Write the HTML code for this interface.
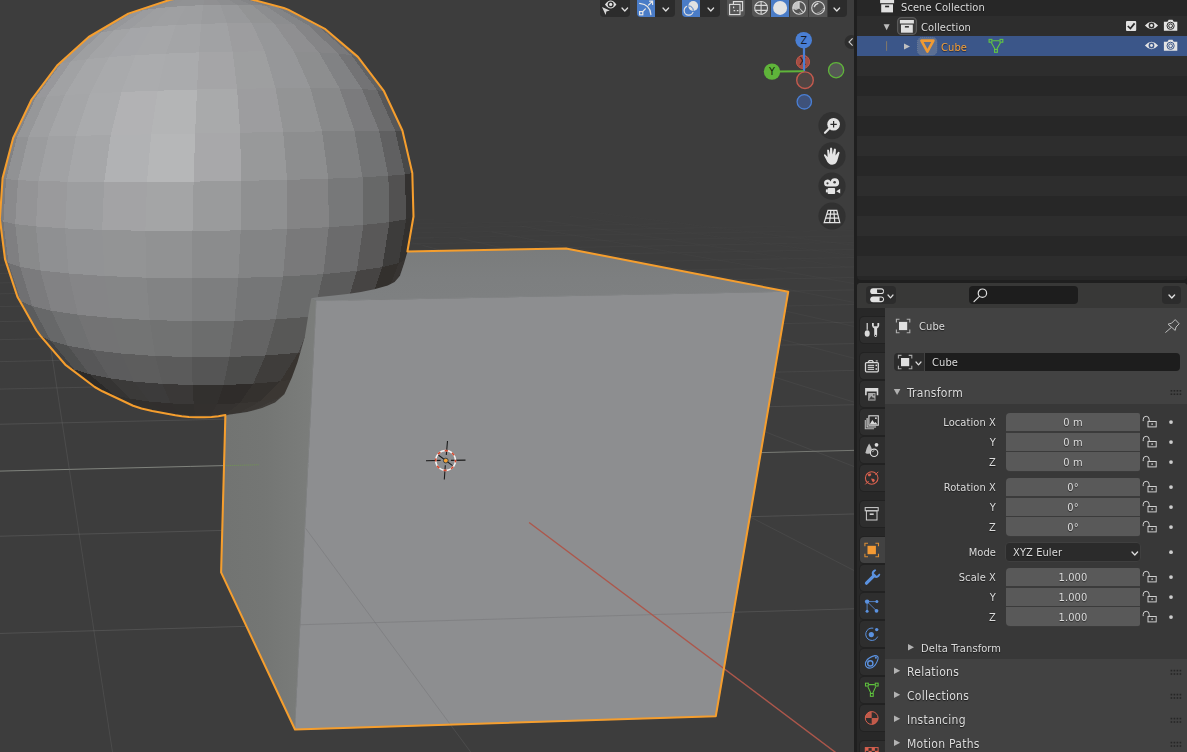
<!DOCTYPE html>
<html lang="en"><head><meta charset="utf-8"><title>Blender</title>
<style>
html,body{margin:0;padding:0;background:#1f1f1f;}
body{width:1187px;height:752px;position:relative;overflow:hidden;font-family:"DejaVu Sans Condensed","DejaVu Sans","Liberation Sans",sans-serif;font-size:11px;color:#e6e6e6;}
.vp{position:absolute;left:0;top:0;display:block;}

.ic{position:absolute;display:block;overflow:visible}
.abs{position:absolute}
.t,.pt{will-change:transform}
.t{position:absolute;white-space:pre;font-size:11px;line-height:14px;letter-spacing:.1px;color:#dcdcdc;text-shadow:0 1px 1px rgba(0,0,0,.55)}
.t.r{text-align:right}
.t.c{text-align:center}
.pt{position:absolute;white-space:pre;font-size:12px;line-height:14px;color:#dcdcdc;letter-spacing:.28px;text-shadow:0 1px 1px rgba(0,0,0,.6)}
#hdr3d .b{position:absolute;top:-4px;height:21px;box-sizing:border-box}
.bd{background:#2c2c2c}
.bb{background:#4a7cc7}
.bg{background:#555}
#divider{position:absolute;left:854px;top:0;width:3px;height:752px;background:#1f1f1f}
#outliner{position:absolute;left:857px;top:0;width:330px;height:280px;background:#272727;border-radius:0 0 4px 4px;overflow:hidden}
#outliner .row{position:absolute;left:0;width:330px;height:20px}
#outliner .row.alt{background:#2d2d2d}
#outliner .row.sel{background:#3b5689}
#props{position:absolute;left:857px;top:283px;width:330px;height:469px;background:#424242;border-radius:4px 4px 0 0;overflow:hidden}
#props .hdr{position:absolute;left:0;top:0;width:330px;height:25px;background:#383837}
#props .tabs{position:absolute;left:0;top:25px;width:28px;height:444px;background:#282828;overflow:hidden}
#props .tab{position:absolute;left:3px;width:25px;height:26px;background:#2e2e2e;border-radius:4px 0 0 4px;box-shadow:0 0 0 1px #222}
#props .tab.on{background:#424242}
#props .body{position:absolute;left:28px;top:121px;width:302px;height:255px;background:#383838}
.fld{position:absolute;background:#595959;box-sizing:border-box}
.btn{position:absolute;box-sizing:border-box;border-radius:4px;background:#2c2c2c;border:1px solid #3e3e3e}
.dk{position:absolute;box-sizing:border-box;border-radius:4px;background:#1d1d1d;border:1px solid #373737}

</style></head><body>
<svg class="vp" width="854" height="752" viewBox="0 0 854 752">
<rect width="854" height="752" fill="#3d3d3d"/>
<line x1="-49.5" y1="224.4" x2="72.1" y2="222.3" stroke="#8a8a8a" stroke-opacity="0.03" stroke-width="1"/>
<line x1="72.1" y1="222.3" x2="192.8" y2="220.2" stroke="#8a8a8a" stroke-opacity="0.03" stroke-width="1"/>
<line x1="192.8" y1="220.2" x2="312.7" y2="218.2" stroke="#8a8a8a" stroke-opacity="0.03" stroke-width="1"/>
<line x1="-48.4" y1="228.0" x2="72.4" y2="225.9" stroke="#8a8a8a" stroke-opacity="0.03" stroke-width="1"/>
<line x1="72.4" y1="225.9" x2="194.4" y2="223.8" stroke="#8a8a8a" stroke-opacity="0.03" stroke-width="1"/>
<line x1="194.4" y1="223.8" x2="313.5" y2="221.8" stroke="#8a8a8a" stroke-opacity="0.03" stroke-width="1"/>
<line x1="313.5" y1="221.8" x2="433.8" y2="219.7" stroke="#8a8a8a" stroke-opacity="0.03" stroke-width="1"/>
<line x1="-49.3" y1="232.0" x2="72.7" y2="229.9" stroke="#8a8a8a" stroke-opacity="0.04" stroke-width="1"/>
<line x1="72.7" y1="229.9" x2="193.9" y2="227.8" stroke="#8a8a8a" stroke-opacity="0.04" stroke-width="1"/>
<line x1="193.9" y1="227.8" x2="314.3" y2="225.7" stroke="#8a8a8a" stroke-opacity="0.04" stroke-width="1"/>
<line x1="314.3" y1="225.7" x2="433.9" y2="223.6" stroke="#8a8a8a" stroke-opacity="0.03" stroke-width="1"/>
<line x1="433.9" y1="223.6" x2="552.6" y2="221.5" stroke="#8a8a8a" stroke-opacity="0.03" stroke-width="1"/>
<line x1="-48.2" y1="236.3" x2="73.1" y2="234.2" stroke="#8a8a8a" stroke-opacity="0.04" stroke-width="1"/>
<line x1="73.1" y1="234.2" x2="193.5" y2="232.1" stroke="#8a8a8a" stroke-opacity="0.04" stroke-width="1"/>
<line x1="193.5" y1="232.1" x2="313.0" y2="230.0" stroke="#8a8a8a" stroke-opacity="0.04" stroke-width="1"/>
<line x1="313.0" y1="230.0" x2="433.9" y2="227.9" stroke="#8a8a8a" stroke-opacity="0.04" stroke-width="1"/>
<line x1="433.9" y1="227.9" x2="551.9" y2="225.8" stroke="#8a8a8a" stroke-opacity="0.04" stroke-width="1"/>
<line x1="551.9" y1="225.8" x2="669.0" y2="223.7" stroke="#8a8a8a" stroke-opacity="0.03" stroke-width="1"/>
<line x1="-49.2" y1="241.1" x2="71.2" y2="239.0" stroke="#8a8a8a" stroke-opacity="0.05" stroke-width="1"/>
<line x1="71.2" y1="239.0" x2="193.0" y2="236.8" stroke="#8a8a8a" stroke-opacity="0.05" stroke-width="1"/>
<line x1="193.0" y1="236.8" x2="311.6" y2="234.7" stroke="#8a8a8a" stroke-opacity="0.04" stroke-width="1"/>
<line x1="311.6" y1="234.7" x2="431.8" y2="232.6" stroke="#8a8a8a" stroke-opacity="0.04" stroke-width="1"/>
<line x1="431.8" y1="232.6" x2="551.1" y2="230.5" stroke="#8a8a8a" stroke-opacity="0.04" stroke-width="1"/>
<line x1="551.1" y1="230.5" x2="667.4" y2="228.4" stroke="#8a8a8a" stroke-opacity="0.04" stroke-width="1"/>
<line x1="667.4" y1="228.4" x2="785.1" y2="226.3" stroke="#8a8a8a" stroke-opacity="0.03" stroke-width="1"/>
<line x1="-47.9" y1="246.3" x2="73.9" y2="244.2" stroke="#8a8a8a" stroke-opacity="0.05" stroke-width="1"/>
<line x1="73.9" y1="244.2" x2="194.8" y2="242.0" stroke="#8a8a8a" stroke-opacity="0.05" stroke-width="1"/>
<line x1="194.8" y1="242.0" x2="314.9" y2="239.9" stroke="#8a8a8a" stroke-opacity="0.05" stroke-width="1"/>
<line x1="314.9" y1="239.9" x2="434.1" y2="237.7" stroke="#8a8a8a" stroke-opacity="0.05" stroke-width="1"/>
<line x1="434.1" y1="237.7" x2="552.6" y2="235.6" stroke="#8a8a8a" stroke-opacity="0.04" stroke-width="1"/>
<line x1="552.6" y1="235.6" x2="670.2" y2="233.5" stroke="#8a8a8a" stroke-opacity="0.04" stroke-width="1"/>
<line x1="670.2" y1="233.5" x2="787.1" y2="231.4" stroke="#8a8a8a" stroke-opacity="0.04" stroke-width="1"/>
<line x1="787.1" y1="231.4" x2="903.1" y2="229.4" stroke="#8a8a8a" stroke-opacity="0.03" stroke-width="1"/>
<line x1="-49.0" y1="252.2" x2="71.8" y2="250.0" stroke="#8a8a8a" stroke-opacity="0.06" stroke-width="1"/>
<line x1="71.8" y1="250.0" x2="191.8" y2="247.9" stroke="#8a8a8a" stroke-opacity="0.06" stroke-width="1"/>
<line x1="191.8" y1="247.9" x2="313.4" y2="245.7" stroke="#8a8a8a" stroke-opacity="0.05" stroke-width="1"/>
<line x1="313.4" y1="245.7" x2="431.8" y2="243.5" stroke="#8a8a8a" stroke-opacity="0.05" stroke-width="1"/>
<line x1="431.8" y1="243.5" x2="549.3" y2="241.4" stroke="#8a8a8a" stroke-opacity="0.05" stroke-width="1"/>
<line x1="549.3" y1="241.4" x2="668.5" y2="239.3" stroke="#8a8a8a" stroke-opacity="0.04" stroke-width="1"/>
<line x1="668.5" y1="239.3" x2="784.4" y2="237.2" stroke="#8a8a8a" stroke-opacity="0.04" stroke-width="1"/>
<line x1="784.4" y1="237.2" x2="902.0" y2="235.1" stroke="#8a8a8a" stroke-opacity="0.04" stroke-width="1"/>
<line x1="-47.5" y1="258.7" x2="72.2" y2="256.5" stroke="#8a8a8a" stroke-opacity="0.06" stroke-width="1"/>
<line x1="72.2" y1="256.5" x2="193.7" y2="254.3" stroke="#8a8a8a" stroke-opacity="0.06" stroke-width="1"/>
<line x1="193.7" y1="254.3" x2="314.5" y2="252.1" stroke="#8a8a8a" stroke-opacity="0.06" stroke-width="1"/>
<line x1="314.5" y1="252.1" x2="434.4" y2="249.9" stroke="#8a8a8a" stroke-opacity="0.06" stroke-width="1"/>
<line x1="434.4" y1="249.9" x2="550.8" y2="247.8" stroke="#8a8a8a" stroke-opacity="0.05" stroke-width="1"/>
<line x1="550.8" y1="247.8" x2="669.1" y2="245.7" stroke="#8a8a8a" stroke-opacity="0.05" stroke-width="1"/>
<line x1="669.1" y1="245.7" x2="786.6" y2="243.5" stroke="#8a8a8a" stroke-opacity="0.05" stroke-width="1"/>
<line x1="786.6" y1="243.5" x2="903.3" y2="241.4" stroke="#8a8a8a" stroke-opacity="0.04" stroke-width="1"/>
<line x1="-48.8" y1="266.0" x2="72.6" y2="263.8" stroke="#8a8a8a" stroke-opacity="0.07" stroke-width="1"/>
<line x1="72.6" y1="263.8" x2="193.1" y2="261.6" stroke="#8a8a8a" stroke-opacity="0.07" stroke-width="1"/>
<line x1="193.1" y1="261.6" x2="312.8" y2="259.4" stroke="#8a8a8a" stroke-opacity="0.07" stroke-width="1"/>
<line x1="312.8" y1="259.4" x2="431.7" y2="257.2" stroke="#8a8a8a" stroke-opacity="0.06" stroke-width="1"/>
<line x1="431.7" y1="257.2" x2="549.8" y2="255.0" stroke="#8a8a8a" stroke-opacity="0.06" stroke-width="1"/>
<line x1="549.8" y1="255.0" x2="667.1" y2="252.9" stroke="#8a8a8a" stroke-opacity="0.06" stroke-width="1"/>
<line x1="667.1" y1="252.9" x2="783.6" y2="250.7" stroke="#8a8a8a" stroke-opacity="0.05" stroke-width="1"/>
<line x1="783.6" y1="250.7" x2="902.0" y2="248.6" stroke="#8a8a8a" stroke-opacity="0.05" stroke-width="1"/>
<line x1="-47.1" y1="274.3" x2="73.1" y2="272.1" stroke="#8a8a8a" stroke-opacity="0.08" stroke-width="1"/>
<line x1="73.1" y1="272.1" x2="195.5" y2="269.8" stroke="#8a8a8a" stroke-opacity="0.08" stroke-width="1"/>
<line x1="195.5" y1="269.8" x2="314.0" y2="267.6" stroke="#8a8a8a" stroke-opacity="0.07" stroke-width="1"/>
<line x1="314.0" y1="267.6" x2="434.7" y2="265.4" stroke="#8a8a8a" stroke-opacity="0.07" stroke-width="1"/>
<line x1="434.7" y1="265.4" x2="551.6" y2="263.2" stroke="#8a8a8a" stroke-opacity="0.07" stroke-width="1"/>
<line x1="551.6" y1="263.2" x2="670.7" y2="261.0" stroke="#8a8a8a" stroke-opacity="0.06" stroke-width="1"/>
<line x1="670.7" y1="261.0" x2="786.0" y2="258.8" stroke="#8a8a8a" stroke-opacity="0.06" stroke-width="1"/>
<line x1="786.0" y1="258.8" x2="903.5" y2="256.6" stroke="#8a8a8a" stroke-opacity="0.05" stroke-width="1"/>
<line x1="-48.5" y1="283.8" x2="70.3" y2="281.6" stroke="#8a8a8a" stroke-opacity="0.09" stroke-width="1"/>
<line x1="70.3" y1="281.6" x2="191.6" y2="279.3" stroke="#8a8a8a" stroke-opacity="0.08" stroke-width="1"/>
<line x1="191.6" y1="279.3" x2="312.1" y2="277.0" stroke="#8a8a8a" stroke-opacity="0.08" stroke-width="1"/>
<line x1="312.1" y1="277.0" x2="431.7" y2="274.8" stroke="#8a8a8a" stroke-opacity="0.08" stroke-width="1"/>
<line x1="431.7" y1="274.8" x2="550.5" y2="272.5" stroke="#8a8a8a" stroke-opacity="0.07" stroke-width="1"/>
<line x1="550.5" y1="272.5" x2="668.5" y2="270.3" stroke="#8a8a8a" stroke-opacity="0.07" stroke-width="1"/>
<line x1="668.5" y1="270.3" x2="785.7" y2="268.1" stroke="#8a8a8a" stroke-opacity="0.06" stroke-width="1"/>
<line x1="785.7" y1="268.1" x2="902.1" y2="265.9" stroke="#8a8a8a" stroke-opacity="0.06" stroke-width="1"/>
<line x1="-46.5" y1="294.7" x2="74.3" y2="292.4" stroke="#8a8a8a" stroke-opacity="0.10" stroke-width="1"/>
<line x1="74.3" y1="292.4" x2="194.2" y2="290.1" stroke="#8a8a8a" stroke-opacity="0.09" stroke-width="1"/>
<line x1="194.2" y1="290.1" x2="313.3" y2="287.8" stroke="#8a8a8a" stroke-opacity="0.09" stroke-width="1"/>
<line x1="313.3" y1="287.8" x2="435.1" y2="285.5" stroke="#8a8a8a" stroke-opacity="0.09" stroke-width="1"/>
<line x1="435.1" y1="285.5" x2="552.6" y2="283.2" stroke="#8a8a8a" stroke-opacity="0.08" stroke-width="1"/>
<line x1="552.6" y1="283.2" x2="669.3" y2="281.0" stroke="#8a8a8a" stroke-opacity="0.08" stroke-width="1"/>
<line x1="669.3" y1="281.0" x2="785.2" y2="278.8" stroke="#8a8a8a" stroke-opacity="0.07" stroke-width="1"/>
<line x1="785.2" y1="278.8" x2="903.8" y2="276.5" stroke="#8a8a8a" stroke-opacity="0.07" stroke-width="1"/>
<line x1="-48.1" y1="307.5" x2="71.2" y2="305.2" stroke="#8a8a8a" stroke-opacity="0.11" stroke-width="1"/>
<line x1="71.2" y1="305.2" x2="193.4" y2="302.8" stroke="#8a8a8a" stroke-opacity="0.11" stroke-width="1"/>
<line x1="193.4" y1="302.8" x2="311.0" y2="300.5" stroke="#8a8a8a" stroke-opacity="0.10" stroke-width="1"/>
<line x1="311.0" y1="300.5" x2="431.6" y2="298.2" stroke="#8a8a8a" stroke-opacity="0.10" stroke-width="1"/>
<line x1="431.6" y1="298.2" x2="551.4" y2="295.8" stroke="#8a8a8a" stroke-opacity="0.10" stroke-width="1"/>
<line x1="551.4" y1="295.8" x2="666.6" y2="293.6" stroke="#8a8a8a" stroke-opacity="0.09" stroke-width="1"/>
<line x1="666.6" y1="293.6" x2="784.8" y2="291.2" stroke="#8a8a8a" stroke-opacity="0.08" stroke-width="1"/>
<line x1="784.8" y1="291.2" x2="902.1" y2="289.0" stroke="#8a8a8a" stroke-opacity="0.08" stroke-width="1"/>
<line x1="-49.9" y1="322.6" x2="71.7" y2="320.2" stroke="#8a8a8a" stroke-opacity="0.12" stroke-width="1"/>
<line x1="71.7" y1="320.2" x2="192.5" y2="317.8" stroke="#8a8a8a" stroke-opacity="0.12" stroke-width="1"/>
<line x1="192.5" y1="317.8" x2="312.4" y2="315.4" stroke="#8a8a8a" stroke-opacity="0.12" stroke-width="1"/>
<line x1="312.4" y1="315.4" x2="431.6" y2="313.0" stroke="#8a8a8a" stroke-opacity="0.11" stroke-width="1"/>
<line x1="431.6" y1="313.0" x2="549.9" y2="310.6" stroke="#8a8a8a" stroke-opacity="0.11" stroke-width="1"/>
<line x1="549.9" y1="310.6" x2="667.4" y2="308.3" stroke="#8a8a8a" stroke-opacity="0.10" stroke-width="1"/>
<line x1="667.4" y1="308.3" x2="784.2" y2="306.0" stroke="#8a8a8a" stroke-opacity="0.10" stroke-width="1"/>
<line x1="784.2" y1="306.0" x2="900.1" y2="303.6" stroke="#8a8a8a" stroke-opacity="0.09" stroke-width="1"/>
<line x1="-47.5" y1="340.6" x2="72.3" y2="338.2" stroke="#8a8a8a" stroke-opacity="0.14" stroke-width="1"/>
<line x1="72.3" y1="338.2" x2="191.4" y2="335.7" stroke="#8a8a8a" stroke-opacity="0.14" stroke-width="1"/>
<line x1="191.4" y1="335.7" x2="314.1" y2="333.2" stroke="#8a8a8a" stroke-opacity="0.14" stroke-width="1"/>
<line x1="314.1" y1="333.2" x2="431.5" y2="330.8" stroke="#8a8a8a" stroke-opacity="0.13" stroke-width="1"/>
<line x1="431.5" y1="330.8" x2="548.2" y2="328.4" stroke="#8a8a8a" stroke-opacity="0.12" stroke-width="1"/>
<line x1="548.2" y1="328.4" x2="668.5" y2="326.0" stroke="#8a8a8a" stroke-opacity="0.12" stroke-width="1"/>
<line x1="668.5" y1="326.0" x2="783.5" y2="323.6" stroke="#8a8a8a" stroke-opacity="0.11" stroke-width="1"/>
<line x1="783.5" y1="323.6" x2="902.2" y2="321.2" stroke="#8a8a8a" stroke-opacity="0.10" stroke-width="1"/>
<line x1="-49.7" y1="362.7" x2="68.0" y2="360.2" stroke="#8a8a8a" stroke-opacity="0.16" stroke-width="1"/>
<line x1="68.0" y1="360.2" x2="190.0" y2="357.6" stroke="#8a8a8a" stroke-opacity="0.16" stroke-width="1"/>
<line x1="190.0" y1="357.6" x2="311.2" y2="355.1" stroke="#8a8a8a" stroke-opacity="0.16" stroke-width="1"/>
<line x1="311.2" y1="355.1" x2="431.5" y2="352.5" stroke="#8a8a8a" stroke-opacity="0.15" stroke-width="1"/>
<line x1="431.5" y1="352.5" x2="546.0" y2="350.1" stroke="#8a8a8a" stroke-opacity="0.15" stroke-width="1"/>
<line x1="546.0" y1="350.1" x2="664.8" y2="347.6" stroke="#8a8a8a" stroke-opacity="0.14" stroke-width="1"/>
<line x1="664.8" y1="347.6" x2="782.7" y2="345.1" stroke="#8a8a8a" stroke-opacity="0.13" stroke-width="1"/>
<line x1="782.7" y1="345.1" x2="899.8" y2="342.6" stroke="#8a8a8a" stroke-opacity="0.12" stroke-width="1"/>
<line x1="-20.6" y1="233.3" x2="-49.9" y2="302.8" stroke="#8a8a8a" stroke-opacity="0.06" stroke-width="1"/>
<line x1="-46.7" y1="390.1" x2="74.1" y2="387.5" stroke="#8a8a8a" stroke-opacity="0.19" stroke-width="1"/>
<line x1="74.1" y1="387.5" x2="194.0" y2="384.8" stroke="#8a8a8a" stroke-opacity="0.19" stroke-width="1"/>
<line x1="194.0" y1="384.8" x2="313.1" y2="382.2" stroke="#8a8a8a" stroke-opacity="0.18" stroke-width="1"/>
<line x1="313.1" y1="382.2" x2="431.4" y2="379.6" stroke="#8a8a8a" stroke-opacity="0.18" stroke-width="1"/>
<line x1="431.4" y1="379.6" x2="549.0" y2="377.1" stroke="#8a8a8a" stroke-opacity="0.17" stroke-width="1"/>
<line x1="549.0" y1="377.1" x2="665.7" y2="374.5" stroke="#8a8a8a" stroke-opacity="0.16" stroke-width="1"/>
<line x1="665.7" y1="374.5" x2="781.6" y2="372.0" stroke="#8a8a8a" stroke-opacity="0.15" stroke-width="1"/>
<line x1="781.6" y1="372.0" x2="902.2" y2="369.3" stroke="#8a8a8a" stroke-opacity="0.14" stroke-width="1"/>
<line x1="31.8" y1="224.0" x2="41.8" y2="289.1" stroke="#8a8a8a" stroke-opacity="0.05" stroke-width="1"/>
<line x1="41.8" y1="289.1" x2="120.0" y2="801.2" stroke="#8a8a8a" stroke-opacity="0.19" stroke-width="1"/>
<line x1="-49.4" y1="425.4" x2="68.7" y2="422.7" stroke="#8a8a8a" stroke-opacity="0.23" stroke-width="1"/>
<line x1="68.7" y1="422.7" x2="192.6" y2="419.9" stroke="#8a8a8a" stroke-opacity="0.22" stroke-width="1"/>
<line x1="192.6" y1="419.9" x2="309.2" y2="417.2" stroke="#8a8a8a" stroke-opacity="0.22" stroke-width="1"/>
<line x1="309.2" y1="417.2" x2="431.4" y2="414.4" stroke="#8a8a8a" stroke-opacity="0.21" stroke-width="1"/>
<line x1="431.4" y1="414.4" x2="546.3" y2="411.8" stroke="#8a8a8a" stroke-opacity="0.20" stroke-width="1"/>
<line x1="546.3" y1="411.8" x2="666.9" y2="409.0" stroke="#8a8a8a" stroke-opacity="0.19" stroke-width="1"/>
<line x1="666.9" y1="409.0" x2="780.3" y2="406.4" stroke="#8a8a8a" stroke-opacity="0.18" stroke-width="1"/>
<line x1="780.3" y1="406.4" x2="899.2" y2="403.7" stroke="#8a8a8a" stroke-opacity="0.17" stroke-width="1"/>
<line x1="80.6" y1="223.3" x2="128.3" y2="288.0" stroke="#8a8a8a" stroke-opacity="0.05" stroke-width="1"/>
<line x1="128.3" y1="288.0" x2="504.8" y2="798.3" stroke="#8a8a8a" stroke-opacity="0.18" stroke-width="1"/>
<line x1="-45.3" y1="472.2" x2="69.3" y2="469.4" stroke="#8c8f88" stroke-opacity="0.85" stroke-width="1"/>
<line x1="69.3" y1="469.4" x2="190.8" y2="466.4" stroke="#8c8f88" stroke-opacity="0.85" stroke-width="1"/>
<line x1="190.8" y1="466.4" x2="311.4" y2="463.5" stroke="#8c8f88" stroke-opacity="0.85" stroke-width="1"/>
<line x1="311.4" y1="463.5" x2="431.2" y2="460.6" stroke="#8c8f88" stroke-opacity="0.85" stroke-width="1"/>
<line x1="431.2" y1="460.6" x2="550.2" y2="457.7" stroke="#8c8f88" stroke-opacity="0.84" stroke-width="1"/>
<line x1="550.2" y1="457.7" x2="668.4" y2="454.9" stroke="#8c8f88" stroke-opacity="0.80" stroke-width="1"/>
<line x1="668.4" y1="454.9" x2="785.8" y2="452.0" stroke="#8c8f88" stroke-opacity="0.76" stroke-width="1"/>
<line x1="785.8" y1="452.0" x2="902.4" y2="449.2" stroke="#8c8f88" stroke-opacity="0.72" stroke-width="1"/>
<line x1="-48.9" y1="537.5" x2="70.1" y2="534.4" stroke="#8a8a8a" stroke-opacity="0.25" stroke-width="1"/>
<line x1="70.1" y1="534.4" x2="188.2" y2="531.3" stroke="#8a8a8a" stroke-opacity="0.25" stroke-width="1"/>
<line x1="188.2" y1="531.3" x2="305.6" y2="528.3" stroke="#8a8a8a" stroke-opacity="0.25" stroke-width="1"/>
<line x1="305.6" y1="528.3" x2="431.1" y2="525.0" stroke="#8a8a8a" stroke-opacity="0.25" stroke-width="1"/>
<line x1="431.1" y1="525.0" x2="546.8" y2="522.0" stroke="#8a8a8a" stroke-opacity="0.25" stroke-width="1"/>
<line x1="546.8" y1="522.0" x2="661.8" y2="519.0" stroke="#8a8a8a" stroke-opacity="0.25" stroke-width="1"/>
<line x1="661.8" y1="519.0" x2="776.0" y2="516.0" stroke="#8a8a8a" stroke-opacity="0.25" stroke-width="1"/>
<line x1="776.0" y1="516.0" x2="898.2" y2="512.8" stroke="#8a8a8a" stroke-opacity="0.25" stroke-width="1"/>
<line x1="171.9" y1="218.6" x2="279.6" y2="274.2" stroke="#8a8a8a" stroke-opacity="0.05" stroke-width="1"/>
<line x1="279.6" y1="274.2" x2="903.8" y2="596.2" stroke="#8a8a8a" stroke-opacity="0.14" stroke-width="1"/>
<line x1="-42.7" y1="634.7" x2="71.3" y2="631.4" stroke="#8a8a8a" stroke-opacity="0.25" stroke-width="1"/>
<line x1="71.3" y1="631.4" x2="195.7" y2="627.8" stroke="#8a8a8a" stroke-opacity="0.25" stroke-width="1"/>
<line x1="195.7" y1="627.8" x2="308.1" y2="624.5" stroke="#8a8a8a" stroke-opacity="0.25" stroke-width="1"/>
<line x1="308.1" y1="624.5" x2="430.9" y2="621.0" stroke="#8a8a8a" stroke-opacity="0.25" stroke-width="1"/>
<line x1="430.9" y1="621.0" x2="552.8" y2="617.5" stroke="#8a8a8a" stroke-opacity="0.25" stroke-width="1"/>
<line x1="552.8" y1="617.5" x2="662.9" y2="614.3" stroke="#8a8a8a" stroke-opacity="0.25" stroke-width="1"/>
<line x1="662.9" y1="614.3" x2="783.2" y2="610.8" stroke="#8a8a8a" stroke-opacity="0.25" stroke-width="1"/>
<line x1="783.2" y1="610.8" x2="902.7" y2="607.4" stroke="#8a8a8a" stroke-opacity="0.25" stroke-width="1"/>
<line x1="211.0" y1="214.9" x2="334.3" y2="263.1" stroke="#8a8a8a" stroke-opacity="0.04" stroke-width="1"/>
<line x1="334.3" y1="263.1" x2="902.4" y2="485.5" stroke="#8a8a8a" stroke-opacity="0.12" stroke-width="1"/>
<line x1="-47.6" y1="795.3" x2="73.2" y2="791.3" stroke="#8a8a8a" stroke-opacity="0.25" stroke-width="1"/>
<line x1="73.2" y1="791.3" x2="193.1" y2="787.3" stroke="#8a8a8a" stroke-opacity="0.25" stroke-width="1"/>
<line x1="193.1" y1="787.3" x2="312.2" y2="783.3" stroke="#8a8a8a" stroke-opacity="0.25" stroke-width="1"/>
<line x1="312.2" y1="783.3" x2="430.5" y2="779.4" stroke="#8a8a8a" stroke-opacity="0.25" stroke-width="1"/>
<line x1="430.5" y1="779.4" x2="548.0" y2="775.4" stroke="#8a8a8a" stroke-opacity="0.25" stroke-width="1"/>
<line x1="548.0" y1="775.4" x2="664.7" y2="771.5" stroke="#8a8a8a" stroke-opacity="0.25" stroke-width="1"/>
<line x1="664.7" y1="771.5" x2="780.6" y2="767.7" stroke="#8a8a8a" stroke-opacity="0.25" stroke-width="1"/>
<line x1="780.6" y1="767.7" x2="895.8" y2="763.8" stroke="#8a8a8a" stroke-opacity="0.25" stroke-width="1"/>
<line x1="247.2" y1="211.4" x2="381.4" y2="253.6" stroke="#8a8a8a" stroke-opacity="0.04" stroke-width="1"/>
<line x1="381.4" y1="253.6" x2="901.5" y2="417.1" stroke="#8a8a8a" stroke-opacity="0.10" stroke-width="1"/>
<line x1="281.0" y1="208.3" x2="423.0" y2="245.5" stroke="#8a8a8a" stroke-opacity="0.03" stroke-width="1"/>
<line x1="423.0" y1="245.5" x2="903.4" y2="371.2" stroke="#8a8a8a" stroke-opacity="0.08" stroke-width="1"/>
<line x1="459.2" y1="238.2" x2="902.6" y2="337.3" stroke="#8a8a8a" stroke-opacity="0.07" stroke-width="1"/>
<line x1="491.7" y1="231.8" x2="903.9" y2="312.1" stroke="#8a8a8a" stroke-opacity="0.06" stroke-width="1"/>
<line x1="520.3" y1="226.0" x2="903.3" y2="292.0" stroke="#8a8a8a" stroke-opacity="0.05" stroke-width="1"/>
<line x1="545.9" y1="220.8" x2="902.7" y2="275.8" stroke="#8a8a8a" stroke-opacity="0.04" stroke-width="1"/>
<line x1="569.5" y1="216.2" x2="903.7" y2="262.7" stroke="#8a8a8a" stroke-opacity="0.04" stroke-width="1"/>
<line x1="590.5" y1="212.0" x2="903.2" y2="251.5" stroke="#8a8a8a" stroke-opacity="0.03" stroke-width="1"/>
<g shape-rendering="crispEdges">
<polygon points="170.4,-0.2 134.6,11.8 143.8,10.1 175.3,-1.1" fill="#88898b"/>
<polygon points="175.3,-1.1 143.8,10.1 155.8,8.5 181.4,-2.0" fill="#8d8e90"/>
<polygon points="181.4,-2.0 155.8,8.5 170.1,7.0 188.7,-2.8" fill="#909193"/>
<polygon points="188.7,-2.8 170.1,7.0 186.2,5.9 196.6,-3.4" fill="#919294"/>
<polygon points="196.6,-3.4 186.2,5.9 203.2,5.1 205.1,-3.8" fill="#919294"/>
<polygon points="205.1,-3.8 203.2,5.1 220.4,4.6 213.6,-4.0" fill="#909092"/>
<polygon points="213.6,-4.0 220.4,4.6 237.0,4.6 221.8,-4.0" fill="#8d8e90"/>
<polygon points="221.8,-4.0 237.0,4.6 252.3,5.0 229.4,-3.8" fill="#898a8c"/>
<polygon points="229.4,-3.8 252.3,5.0 265.5,5.7 236.0,-3.4" fill="#848587"/>
<polygon points="236.0,-3.4 265.5,5.7 276.1,6.7 241.4,-2.9" fill="#7e7e80"/>
<polygon points="241.4,-2.9 276.1,6.7 283.7,8.1 245.5,-2.1" fill="#767678"/>
<polygon points="167.0,0.8 128.4,13.6 134.6,11.8 170.4,-0.2" fill="#808183"/>
<polygon points="134.6,11.8 100.9,32.6 113.9,30.4 143.8,10.1" fill="#96979a"/>
<polygon points="143.8,10.1 113.9,30.4 131.2,28.3 155.8,8.5" fill="#9b9c9f"/>
<polygon points="155.8,8.5 131.2,28.3 152.1,26.5 170.1,7.0" fill="#9e9fa1"/>
<polygon points="170.1,7.0 152.1,26.5 175.8,25.0 186.2,5.9" fill="#9fa0a2"/>
<polygon points="186.2,5.9 175.8,25.0 201.1,23.9 203.2,5.1" fill="#9e9fa1"/>
<polygon points="203.2,5.1 201.1,23.9 226.9,23.2 220.4,4.6" fill="#9b9c9e"/>
<polygon points="220.4,4.6 226.9,23.2 251.7,23.1 237.0,4.6" fill="#98999b"/>
<polygon points="237.0,4.6 251.7,23.1 274.3,23.5 252.3,5.0" fill="#939495"/>
<polygon points="252.3,5.0 274.3,23.5 293.7,24.4 265.5,5.7" fill="#8c8d8f"/>
<polygon points="265.5,5.7 293.7,24.4 309.0,25.7 276.1,6.7" fill="#848587"/>
<polygon points="276.1,6.7 309.0,25.7 319.6,27.4 283.7,8.1" fill="#7a7b7c"/>
<polygon points="283.7,8.1 319.6,27.4 325.4,29.3 288.1,9.6" fill="#6d6d6f"/>
<polygon points="125.3,15.4 88.7,37.0 92.5,34.8 128.4,13.6" fill="#808183"/>
<polygon points="128.4,13.6 92.5,34.8 100.9,32.6 134.6,11.8" fill="#8e8f91"/>
<polygon points="100.9,32.6 71.0,61.3 87.0,59.2 113.9,30.4" fill="#9e9fa1"/>
<polygon points="113.9,30.4 87.0,59.2 108.8,57.1 131.2,28.3" fill="#a3a4a6"/>
<polygon points="131.2,28.3 108.8,57.1 135.5,55.2 152.1,26.5" fill="#a5a6a9"/>
<polygon points="152.1,26.5 135.5,55.2 166.1,53.6 175.8,25.0" fill="#a6a7a9"/>
<polygon points="175.8,25.0 166.1,53.6 199.0,52.4 201.1,23.9" fill="#a4a5a7"/>
<polygon points="201.1,23.9 199.0,52.4 232.6,51.6 226.9,23.2" fill="#a1a2a4"/>
<polygon points="226.9,23.2 232.6,51.6 264.8,51.4 251.7,23.1" fill="#9d9d9f"/>
<polygon points="251.7,23.1 264.8,51.4 294.1,51.6 274.3,23.5" fill="#969799"/>
<polygon points="274.3,23.5 294.1,51.6 319.0,52.4 293.7,24.4" fill="#8f8f91"/>
<polygon points="293.7,24.4 319.0,52.4 338.2,53.6 309.0,25.7" fill="#858587"/>
<polygon points="309.0,25.7 338.2,53.6 351.3,55.1 319.6,27.4" fill="#79797b"/>
<polygon points="319.6,27.4 351.3,55.1 357.9,56.9 325.4,29.3" fill="#69696b"/>
<polygon points="88.7,37.0 57.1,65.5 61.0,63.5 92.5,34.8" fill="#868689"/>
<polygon points="92.5,34.8 61.0,63.5 71.0,61.3 100.9,32.6" fill="#959699"/>
<polygon points="71.0,61.3 46.5,96.7 64.7,95.1 87.0,59.2" fill="#a1a2a4"/>
<polygon points="87.0,59.2 64.7,95.1 90.0,93.6 108.8,57.1" fill="#a6a7a9"/>
<polygon points="108.8,57.1 90.0,93.6 121.4,92.0 135.5,55.2" fill="#a9aaac"/>
<polygon points="135.5,55.2 121.4,92.0 157.7,90.7 166.1,53.6" fill="#abacae"/>
<polygon points="166.1,53.6 157.7,90.7 197.0,89.5 199.0,52.4" fill="#aaabad"/>
<polygon points="199.0,52.4 197.0,89.5 237.1,88.7 232.6,51.6" fill="#a5a5a7"/>
<polygon points="232.6,51.6 237.1,88.7 275.6,88.3 264.8,51.4" fill="#9e9fa0"/>
<polygon points="264.8,51.4 275.6,88.3 310.4,88.2 294.1,51.6" fill="#969799"/>
<polygon points="294.1,51.6 310.4,88.2 339.7,88.5 319.0,52.4" fill="#8d8e8f"/>
<polygon points="319.0,52.4 339.7,88.5 362.1,89.1 338.2,53.6" fill="#818284"/>
<polygon points="338.2,53.6 362.1,89.1 376.9,90.1 351.3,55.1" fill="#737375"/>
<polygon points="351.3,55.1 376.9,90.1 383.9,91.2 357.9,56.9" fill="#616263"/>
<polygon points="57.1,65.5 31.7,99.5 35.5,98.2 61.0,63.5" fill="#87888a"/>
<polygon points="61.0,63.5 35.5,98.2 46.5,96.7 71.0,61.3" fill="#98989b"/>
<polygon points="46.5,96.7 28.5,137.0 48.3,136.5 64.7,95.1" fill="#9fa0a2"/>
<polygon points="64.7,95.1 48.3,136.5 76.0,135.8 90.0,93.6" fill="#a5a6a8"/>
<polygon points="90.0,93.6 76.0,135.8 110.8,135.1 121.4,92.0" fill="#aaabad"/>
<polygon points="121.4,92.0 110.8,135.1 151.2,134.3 157.7,90.7" fill="#b2b2b4"/>
<polygon points="157.7,90.7 151.2,134.3 195.1,133.5 197.0,89.5" fill="#b4b5b6"/>
<polygon points="197.0,89.5 195.1,133.5 240.1,132.7 237.1,88.7" fill="#a9aaab"/>
<polygon points="237.1,88.7 240.1,132.7 283.2,132.0 275.6,88.3" fill="#9d9d9f"/>
<polygon points="275.6,88.3 283.2,132.0 322.1,131.4 310.4,88.2" fill="#939495"/>
<polygon points="310.4,88.2 322.1,131.4 354.5,130.9 339.7,88.5" fill="#88898a"/>
<polygon points="339.7,88.5 354.5,130.9 379.1,130.6 362.1,89.1" fill="#7b7b7d"/>
<polygon points="362.1,89.1 379.1,130.6 395.1,130.5 376.9,90.1" fill="#6b6b6c"/>
<polygon points="376.9,90.1 395.1,130.5 402.3,130.6 383.9,91.2" fill="#575758"/>
<polygon points="31.7,99.5 13.3,137.6 17.0,137.4 35.5,98.2" fill="#868688"/>
<polygon points="35.5,98.2 17.0,137.4 28.5,137.0 46.5,96.7" fill="#969799"/>
<polygon points="28.5,137.0 18.0,180.2 38.5,181.0 48.3,136.5" fill="#9b9c9e"/>
<polygon points="48.3,136.5 38.5,181.0 67.5,181.7 76.0,135.8" fill="#a1a2a4"/>
<polygon points="76.0,135.8 67.5,181.7 104.2,182.0 110.8,135.1" fill="#a6a7a9"/>
<polygon points="110.8,135.1 104.2,182.0 147.0,182.0 151.2,134.3" fill="#b1b2b4"/>
<polygon points="151.2,134.3 147.0,182.0 193.6,181.6 195.1,133.5" fill="#b6b7b8"/>
<polygon points="195.1,133.5 193.6,181.6 241.3,180.9 240.1,132.7" fill="#a8a8aa"/>
<polygon points="240.1,132.7 241.3,180.9 287.1,179.9 283.2,132.0" fill="#98999a"/>
<polygon points="283.2,132.0 287.1,179.9 328.3,178.7 322.1,131.4" fill="#8d8e8f"/>
<polygon points="322.1,131.4 328.3,178.7 362.5,177.3 354.5,130.9" fill="#808182"/>
<polygon points="354.5,130.9 362.5,177.3 388.4,175.8 379.1,130.6" fill="#727374"/>
<polygon points="379.1,130.6 388.4,175.8 405.0,174.4 395.1,130.5" fill="#606061"/>
<polygon points="395.1,130.5 405.0,174.4 412.3,173.0 402.3,130.6" fill="#484848"/>
<polygon points="13.3,137.6 2.7,178.0 6.1,179.1 17.0,137.4" fill="#828284"/>
<polygon points="17.0,137.4 6.1,179.1 18.0,180.2 28.5,137.0" fill="#919294"/>
<polygon points="18.0,180.2 15.2,224.1 35.9,226.4 38.5,181.0" fill="#949496"/>
<polygon points="38.5,181.0 35.9,226.4 65.1,228.4 67.5,181.7" fill="#9a9a9c"/>
<polygon points="67.5,181.7 65.1,228.4 102.2,229.9 104.2,182.0" fill="#9d9ea0"/>
<polygon points="104.2,182.0 102.2,229.9 145.4,230.8 147.0,182.0" fill="#a3a3a5"/>
<polygon points="147.0,182.0 145.4,230.8 192.5,230.9 193.6,181.6" fill="#a4a5a6"/>
<polygon points="193.6,181.6 192.5,230.9 240.7,230.4 241.3,180.9" fill="#9a9b9c"/>
<polygon points="241.3,180.9 240.7,230.4 287.0,229.1 287.1,179.9" fill="#8f9091"/>
<polygon points="287.1,179.9 287.0,229.1 328.7,227.2 328.3,178.7" fill="#848485"/>
<polygon points="328.3,178.7 328.7,227.2 363.3,224.9 362.5,177.3" fill="#777879"/>
<polygon points="362.5,177.3 363.3,224.9 389.4,222.2 388.4,175.8" fill="#676868"/>
<polygon points="388.4,175.8 389.4,222.2 406.1,219.3 405.0,174.4" fill="#525151"/>
<polygon points="405.0,174.4 406.1,219.3 413.4,216.5 412.3,173.0" fill="#333130"/>
<polygon points="2.7,178.0 -0.0,219.0 3.4,221.6 6.1,179.1" fill="#7c7c7e"/>
<polygon points="6.1,179.1 3.4,221.6 15.2,224.1 18.0,180.2" fill="#8a8a8c"/>
<polygon points="15.2,224.1 20.1,266.8 40.3,270.4 35.9,226.4" fill="#898a8b"/>
<polygon points="35.9,226.4 40.3,270.4 68.7,273.5 65.1,228.4" fill="#8f9092"/>
<polygon points="65.1,228.4 68.7,273.5 104.6,276.0 102.2,229.9" fill="#929395"/>
<polygon points="102.2,229.9 104.6,276.0 146.3,277.7 145.4,230.8" fill="#939495"/>
<polygon points="145.4,230.8 146.3,277.7 191.8,278.3 192.5,230.9" fill="#919293"/>
<polygon points="192.5,230.9 191.8,278.3 238.3,277.9 240.7,230.4" fill="#8b8c8d"/>
<polygon points="240.7,230.4 238.3,277.9 283.1,276.5 287.0,229.1" fill="#838485"/>
<polygon points="287.0,229.1 283.1,276.5 323.3,274.1 328.7,227.2" fill="#79797a"/>
<polygon points="328.7,227.2 323.3,274.1 356.9,270.9 363.3,224.9" fill="#6b6b6c"/>
<polygon points="363.3,224.9 356.9,270.9 382.3,267.2 389.4,222.2" fill="#595858"/>
<polygon points="389.4,222.2 382.3,267.2 398.7,263.1 406.1,219.3" fill="#3d3c3b"/>
<polygon points="406.1,219.3 398.7,263.1 406.0,259.0 413.4,216.5" fill="#32302e"/>
<polygon points="-0.0,219.0 5.0,259.0 8.5,262.9 3.4,221.6" fill="#737375"/>
<polygon points="3.4,221.6 8.5,262.9 20.1,266.8 15.2,224.1" fill="#7f7f81"/>
<polygon points="20.1,266.8 32.3,306.2 51.3,310.7 40.3,270.4" fill="#7b7b7d"/>
<polygon points="40.3,270.4 51.3,310.7 77.9,314.7 68.7,273.5" fill="#828284"/>
<polygon points="68.7,273.5 77.9,314.7 111.1,317.9 104.6,276.0" fill="#858587"/>
<polygon points="104.6,276.0 111.1,317.9 149.7,320.1 146.3,277.7" fill="#858687"/>
<polygon points="146.3,277.7 149.7,320.1 191.6,321.1 191.8,278.3" fill="#828384"/>
<polygon points="191.8,278.3 191.6,321.1 234.5,320.8 238.3,277.9" fill="#7d7e7f"/>
<polygon points="238.3,277.9 234.5,320.8 275.7,319.3 283.1,276.5" fill="#757677"/>
<polygon points="283.1,276.5 275.7,319.3 312.9,316.6 323.3,274.1" fill="#6a6b6b"/>
<polygon points="323.3,274.1 312.9,316.6 344.1,312.9 356.9,270.9" fill="#5b5b5b"/>
<polygon points="356.9,270.9 344.1,312.9 367.8,308.6 382.3,267.2" fill="#464443"/>
<polygon points="382.3,267.2 367.8,308.6 383.4,303.7 398.7,263.1" fill="#33302d"/>
<polygon points="398.7,263.1 383.4,303.7 390.7,298.7 406.0,259.0" fill="#373432"/>
<polygon points="5.0,259.0 17.4,296.6 21.1,301.4 8.5,262.9" fill="#636364"/>
<polygon points="8.5,262.9 21.1,301.4 32.3,306.2 20.1,266.8" fill="#707072"/>
<polygon points="32.3,306.2 50.8,340.9 68.0,345.7 51.3,310.7" fill="#676869"/>
<polygon points="51.3,310.7 68.0,345.7 91.8,350.0 77.9,314.7" fill="#6f7071"/>
<polygon points="77.9,314.7 91.8,350.0 121.3,353.5 111.1,317.9" fill="#737374"/>
<polygon points="111.1,317.9 121.3,353.5 155.2,356.0 149.7,320.1" fill="#737474"/>
<polygon points="149.7,320.1 155.2,356.0 191.9,357.1 191.6,321.1" fill="#717272"/>
<polygon points="191.6,321.1 191.9,357.1 229.4,357.0 234.5,320.8" fill="#6c6d6d"/>
<polygon points="234.5,320.8 229.4,357.0 265.5,355.5 275.7,319.3" fill="#646464"/>
<polygon points="275.7,319.3 265.5,355.5 298.2,352.8 312.9,316.6" fill="#585857"/>
<polygon points="312.9,316.6 298.2,352.8 325.8,349.0 344.1,312.9" fill="#484645"/>
<polygon points="344.1,312.9 325.8,349.0 347.1,344.4 367.8,308.6" fill="#36332f"/>
<polygon points="367.8,308.6 347.1,344.4 361.3,339.3 383.4,303.7" fill="#3b3733"/>
<polygon points="383.4,303.7 361.3,339.3 368.3,334.0 390.7,298.7" fill="#3d3a37"/>
<polygon points="17.4,296.6 36.5,330.5 40.3,335.7 21.1,301.4" fill="#4c4c4d"/>
<polygon points="21.1,301.4 40.3,335.7 50.8,340.9 32.3,306.2" fill="#5b5c5d"/>
<polygon points="50.8,340.9 74.5,369.5 89.4,374.2 68.0,345.7" fill="#4e4f4f"/>
<polygon points="68.0,345.7 89.4,374.2 109.6,378.3 91.8,350.0" fill="#575758"/>
<polygon points="91.8,350.0 109.6,378.3 134.2,381.6 121.3,353.5" fill="#5c5c5d"/>
<polygon points="121.3,353.5 134.2,381.6 162.4,383.9 155.2,356.0" fill="#5d5d5d"/>
<polygon points="155.2,356.0 162.4,383.9 192.6,385.1 191.9,357.1" fill="#5b5b5b"/>
<polygon points="191.9,357.1 192.6,385.1 223.5,385.1 229.4,357.0" fill="#555555"/>
<polygon points="229.4,357.0 223.5,385.1 253.2,383.7 265.5,355.5" fill="#4c4c4b"/>
<polygon points="265.5,355.5 253.2,383.7 280.3,381.3 298.2,352.8" fill="#3f3d3b"/>
<polygon points="298.2,352.8 280.3,381.3 303.3,377.8 325.8,349.0" fill="#383430"/>
<polygon points="325.8,349.0 303.3,377.8 321.4,373.5 347.1,344.4" fill="#3f3a36"/>
<polygon points="347.1,344.4 321.4,373.5 333.8,368.7 361.3,339.3" fill="#433f3a"/>
<polygon points="361.3,339.3 333.8,368.7 340.2,363.6 368.3,334.0" fill="#44403d"/>
<polygon points="40.3,335.7 65.2,364.5 74.5,369.5 50.8,340.9" fill="#414142"/>
<polygon points="74.5,369.5 102.4,391.3 114.3,395.2 89.4,374.2" fill="#2b2a29"/>
<polygon points="89.4,374.2 114.3,395.2 130.1,398.7 109.6,378.3" fill="#353433"/>
<polygon points="109.6,378.3 130.1,398.7 149.1,401.5 134.2,381.6" fill="#3b3a39"/>
<polygon points="134.2,381.6 149.1,401.5 170.7,403.4 162.4,383.9" fill="#3c3b3b"/>
<polygon points="162.4,383.9 170.7,403.4 193.7,404.4 192.6,385.1" fill="#3a3837"/>
<polygon points="192.6,385.1 193.7,404.4 217.1,404.4 223.5,385.1" fill="#32302e"/>
<polygon points="223.5,385.1 217.1,404.4 239.7,403.3 253.2,383.7" fill="#2f2c2a"/>
<polygon points="253.2,383.7 239.7,403.3 260.3,401.3 280.3,381.3" fill="#34312e"/>
<polygon points="280.3,381.3 260.3,401.3 278.1,398.5 303.3,377.8" fill="#3b3733"/>
<polygon points="303.3,377.8 278.1,398.5 292.3,394.9 321.4,373.5" fill="#413d39"/>
<polygon points="321.4,373.5 292.3,394.9 302.2,390.9 333.8,368.7" fill="#46413d"/>
<polygon points="65.2,364.5 94.7,387.0 102.4,391.3 74.5,369.5" fill="#2f2e2e"/>
<polygon points="102.4,391.3 133.1,405.7 141.5,408.5 114.3,395.2" fill="#333130"/>
<polygon points="114.3,395.2 141.5,408.5 152.3,410.9 130.1,398.7" fill="#31302e"/>
<polygon points="130.1,398.7 152.3,410.9 165.2,412.9 149.1,401.5" fill="#312f2d"/>
<polygon points="149.1,401.5 165.2,412.9 179.6,414.3 170.7,403.4" fill="#312e2d"/>
<polygon points="170.7,403.4 179.6,414.3 195.0,415.0 193.7,404.4" fill="#312f2d"/>
<polygon points="193.7,404.4 195.0,415.0 210.5,415.0 217.1,404.4" fill="#33302e"/>
<polygon points="217.1,404.4 210.5,415.0 225.6,414.2 239.7,403.3" fill="#353230"/>
<polygon points="239.7,403.3 225.6,414.2 239.4,412.9 260.3,401.3" fill="#383532"/>
<polygon points="260.3,401.3 239.4,412.9 251.4,410.9 278.1,398.5" fill="#3b3835"/>
<polygon points="278.1,398.5 251.4,410.9 261.1,408.4 292.3,394.9" fill="#3f3c39"/>
<polygon points="292.3,394.9 261.1,408.4 268.2,405.5 302.2,390.9" fill="#413e3c"/>
<polygon points="152.3,410.9 175.3,415.2 181.7,416.2 165.2,412.9" fill="#383635"/>
<polygon points="165.2,412.9 181.7,416.2 188.9,416.9 179.6,414.3" fill="#383634"/>
<polygon points="179.6,414.3 188.9,416.9 196.5,417.3 195.0,415.0" fill="#383634"/>
<polygon points="195.0,415.0 196.5,417.3 204.1,417.3 210.5,415.0" fill="#393735"/>
<polygon points="210.5,415.0 204.1,417.3 211.5,416.9 225.6,414.2" fill="#3a3736"/>
<polygon points="225.6,414.2 211.5,416.9 218.4,416.2 239.4,412.9" fill="#3b3837"/>
</g>
<defs><linearGradient id="gl" gradientUnits="userSpaceOnUse" x1="225" y1="0" x2="312" y2="0"><stop offset="0" stop-color="#727472"/><stop offset="0.45" stop-color="#747674"/><stop offset="1" stop-color="#7b7d7b"/></linearGradient><linearGradient id="gt" gradientUnits="userSpaceOnUse" x1="0" y1="250" x2="0" y2="298"><stop offset="0" stop-color="#7a7c7c"/><stop offset="0.6" stop-color="#7d7f80"/><stop offset="1" stop-color="#7e8081"/></linearGradient></defs>
<polygon points="316.4,301.0 295.0,729.5 221.1,572.4 224.9,416.1 228.6,414.7 247.2,411.9 262.1,408.1 275.1,402.6 284.4,394.2 291.9,377.4 297.4,362.6 301.2,349.5 304.9,336.5 307.7,318.8 309.6,307.5 311.3,298.2" fill="url(#gl)"/>
<polygon points="316.4,301.0 788.2,291.8 566.0,248.4 408.0,251.2 406.7,254.3 404.0,263.7 400.0,275.8 394.6,281.9 387.8,285.5 374.4,289.3 360.9,292.0 347.4,294.0 333.9,295.6 319.1,297.0 311.3,298.2" fill="url(#gt)"/>
<polygon points="316.4,301.0 788.2,291.8 715.8,716.2 295.0,729.5" fill="#8d8e90" stroke="#8d8e90" stroke-width="0.6"/>
<clipPath id="cf"><polygon points="316.4,301.0 788.2,291.8 715.8,716.2 295.0,729.5"/></clipPath>
<clipPath id="cl"><polygon points="316.4,301.0 295.0,729.5 221.1,572.4 224.9,416.1 228.6,414.7 247.2,411.9 262.1,408.1 275.1,402.6 284.4,394.2 291.9,377.4 297.4,362.6 301.2,349.5 304.9,336.5 307.7,318.8 309.6,307.5 311.3,298.2"/></clipPath>
<g clip-path="url(#cf)" stroke="#707172" stroke-opacity="0.42" stroke-width="1">
<line x1="-1077.9" y1="664.5" x2="2224.2" y2="569.3"/>
<line x1="305.6" y1="528.3" x2="12286.2" y2="16769.2"/>
<line x1="529.1" y1="522.5" x2="529.1" y2="522.5"/>
</g>
<line x1="88.3" y1="468.9" x2="258.8" y2="464.8" stroke="#6fae3c" stroke-opacity="0.6" stroke-width="1" stroke-dasharray="1 1" clip-path="url(#cl)"/>
<line x1="529.1" y1="522.5" x2="870.3" y2="778.5" stroke="#ad574b" stroke-width="1.4"/>
<polygon points="88.7,37.0 88.7,37.0 88.7,37.0 57.1,65.5 57.1,65.5 57.1,65.5 57.1,65.5 57.1,65.5 57.1,65.5 57.1,65.5 57.1,65.5 31.6,99.5 31.6,99.5 31.6,99.5 31.6,99.5 31.6,99.5 31.6,99.5 31.6,99.5 13.3,137.6 13.3,137.6 13.3,137.6 13.3,137.6 13.3,137.6 13.3,137.6 13.3,137.6 2.6,177.9 2.6,177.9 2.6,178.0 2.6,178.0 2.6,178.0 2.6,178.0 2.6,178.0 -0.1,219.0 -0.1,219.0 -0.1,219.0 -0.1,219.0 -0.1,219.0 -0.1,219.0 -0.1,219.0 5.0,259.0 5.0,259.0 5.0,259.0 5.0,259.0 5.0,259.0 5.0,259.0 5.0,259.1 17.4,296.7 17.4,296.7 17.4,296.7 17.4,296.7 17.4,296.7 17.4,296.7 17.4,296.7 17.4,296.7 36.5,330.5 36.5,330.5 40.3,335.7 40.3,335.7 40.3,335.7 40.3,335.7 40.3,335.7 40.3,335.7 65.2,364.5 65.2,364.5 65.2,364.5 65.2,364.5 65.2,364.5 65.2,364.5 65.2,364.5 65.2,364.5 65.2,364.5 65.2,364.6 65.2,364.6 94.7,387.0 94.7,387.0 94.7,387.0 102.4,391.3 102.4,391.3 102.4,391.3 133.1,405.7 133.1,405.7 141.5,408.5 141.5,408.5 141.5,408.5 141.5,408.5 152.3,411.0 152.3,411.0 152.3,411.0 175.3,415.3 175.3,415.3 181.7,416.3 181.7,416.3 181.7,416.3 188.9,417.0 188.9,417.0 188.9,417.0 196.5,417.3 196.5,417.3 196.5,417.3 204.1,417.3 204.1,417.3 204.1,417.3 211.5,417.0 211.5,417.0 211.5,417.0 218.4,416.3 218.4,416.3 225.4,415.1 221.1,572.4 295.0,729.5 715.8,716.2 788.2,291.8 566.0,248.4 407.4,251.5 413.5,216.5 413.5,216.5 413.5,216.5 413.5,216.5 413.5,216.5 413.5,216.5 413.5,216.5 413.5,216.5 413.5,216.5 413.5,216.5 413.5,216.5 412.3,173.0 412.3,173.0 412.3,173.0 412.3,173.0 412.3,173.0 412.3,173.0 412.3,173.0 412.3,173.0 412.3,173.0 412.3,173.0 412.3,173.0 402.4,130.5 402.4,130.5 402.4,130.5 402.4,130.5 402.4,130.5 402.4,130.5 402.4,130.5 402.4,130.5 402.4,130.5 402.4,130.5 402.4,130.5 384.0,91.2 384.0,91.2 384.0,91.2 384.0,91.2 384.0,91.2 384.0,91.2 384.0,91.2 384.0,91.2 384.0,91.2 384.0,91.2 384.0,91.2 357.9,56.9 357.9,56.9 357.9,56.9 357.9,56.9 357.9,56.9 357.9,56.9 357.9,56.9 357.9,56.9 357.9,56.9 357.9,56.9 357.9,56.9 325.4,29.2 325.4,29.2 325.4,29.2 325.4,29.2 325.4,29.2 325.4,29.2 325.4,29.2 325.4,29.2 325.4,29.2 325.4,29.2 325.4,29.2 288.1,9.6 288.1,9.6 283.8,8.0 283.8,8.0 283.8,8.0 283.8,8.0 283.8,8.0 245.5,-2.2 245.5,-2.2 241.5,-2.9 241.5,-2.9 241.5,-2.9 236.0,-3.5 236.0,-3.5 236.0,-3.5 229.4,-3.9 229.4,-3.9 229.4,-3.9 221.8,-4.1 221.8,-4.1 221.8,-4.1 213.6,-4.1 213.6,-4.1 213.6,-4.1 205.1,-3.8 205.1,-3.8 205.1,-3.8 196.6,-3.4 196.6,-3.4 196.6,-3.4 188.7,-2.8 188.7,-2.8 188.7,-2.8 181.4,-2.1 181.4,-2.1 181.4,-2.1 175.3,-1.2 175.3,-1.2 175.3,-1.2 170.4,-0.2 170.4,-0.2 170.4,-0.2 167.0,0.8 167.0,0.8 128.3,13.6 128.3,13.6 128.3,13.6 128.3,13.6 128.3,13.6 128.3,13.6 128.3,13.6 128.3,13.6 128.3,13.6 128.3,13.6 128.3,13.6 128.3,13.6 128.3,13.6 128.3,13.6 128.3,13.6 125.3,15.4 125.3,15.4 88.7,37.0 88.7,37.0 88.7,37.0 88.7,37.0 88.7,37.0 88.7,37.0" fill="none" stroke="#f59e2e" stroke-width="2.05" stroke-linejoin="round"/>
<g id="cursor3d" fill="none">
<g stroke="#1c1c1c" stroke-width="1.1"><path d="M447.5 441 L446.3 455 M445.3 465.3 L444.3 479.5 M426 460.7 L440.6 460.4 M450.9 460.4 L465.5 460.1 M438.3 455 L452.6 465.6"/></g>
<circle cx="445.6" cy="460.5" r="9.9" stroke="#f2f2f2" stroke-width="1.5"/>
<circle cx="445.6" cy="460.5" r="9.9" stroke="#d5492f" stroke-width="1.6" stroke-dasharray="3.2 4.575" stroke-dashoffset="1.2"/>
<circle cx="445.8" cy="460.6" r="2.4" fill="#f7a233" stroke="#20303a" stroke-width="0.8"/>
</g>
</svg>
<div id="hdr3d" class="abs" style="left:0;top:0">
<div class="b bd" style="left:600px;width:30px;border-radius:4px"></div>
<div class="b bb" style="left:637px;width:18px;border-radius:4px 0 0 4px"></div>
<div class="b bd" style="left:655px;width:20px;border-radius:0 4px 4px 0"></div>
<div class="b bb" style="left:682px;width:18px;border-radius:4px 0 0 4px"></div>
<div class="b bd" style="left:700px;width:20px;border-radius:0 4px 4px 0"></div>
<div class="b bg" style="left:727px;width:18px;border-radius:4px"></div>
<div class="b bg" style="left:752px;width:18px;border-radius:4px 0 0 4px"></div>
<div class="b bb" style="left:771px;width:18px;border-radius:0"></div>
<div class="b bg" style="left:790px;width:18px;border-radius:0"></div>
<div class="b bg" style="left:809px;width:18px;border-radius:0"></div>
<div class="b bd" style="left:828px;width:19px;border-radius:0 4px 4px 0"></div>
<svg class="ic" style="left:620.6px;top:6.7px" width="7.6" height="5.0" viewBox="0 0 7.6 5.0" ><path d="M1 1 L3.8 4.0 L6.6 1" fill="none" stroke="#dedede" stroke-width="1.25" stroke-linecap="round" stroke-linejoin="round"/></svg>
<svg class="ic" style="left:661.5px;top:6.7px" width="7.6" height="5.0" viewBox="0 0 7.6 5.0" ><path d="M1 1 L3.8 4.0 L6.6 1" fill="none" stroke="#dedede" stroke-width="1.25" stroke-linecap="round" stroke-linejoin="round"/></svg>
<svg class="ic" style="left:706.7px;top:6.7px" width="7.6" height="5.0" viewBox="0 0 7.6 5.0" ><path d="M1 1 L3.8 4.0 L6.6 1" fill="none" stroke="#dedede" stroke-width="1.25" stroke-linecap="round" stroke-linejoin="round"/></svg>
<svg class="ic" style="left:833.4px;top:6.7px" width="7.6" height="5.0" viewBox="0 0 7.6 5.0" ><path d="M1 1 L3.8 4.0 L6.6 1" fill="none" stroke="#dedede" stroke-width="1.25" stroke-linecap="round" stroke-linejoin="round"/></svg>
<svg class="ic" style="left:0;top:0" width="854" height="20" viewBox="0 0 854 20"><path d="M605 4.4 Q610.7 -3.6 616.4 4.4 Q610.7 12.4 605 4.4Z" fill="#e0e0e0"/><circle cx="610.7" cy="4.4" r="3" fill="#2c2c2c"/><circle cx="610.7" cy="4.4" r="1.6" fill="#e0e0e0"/><path d="M602 7.1 L609.8 10.4 L606.4 11.4 L605.6 14.9Z" fill="#d6d6d6"/><g fill="none" stroke="#e6e6e6" stroke-width="1.2" stroke-linecap="round"><path d="M639.6 3.4 Q650.4 4.6 650.9 14.6"/><path d="M642.6 11.6 L645.4 8.8"/><path d="M648.6 5 L652.4 1.4 M649.6 1.2 L652.6 1.2 L652.6 4.4"/><rect x="639.6" y="11.6" width="3.2" height="3.2"/></g><defs><mask id="mo" maskUnits="userSpaceOnUse" x="680" y="0" width="24" height="20"><rect x="680" y="0" width="24" height="20" fill="#fff"/><circle cx="693.2" cy="6" r="6.1" fill="#000"/></mask><clipPath id="co"><circle cx="693.2" cy="6" r="4.9"/></clipPath></defs><circle cx="693.2" cy="6" r="4.9" fill="#e2e2e2"/><circle cx="688.7" cy="10.5" r="4.6" fill="none" stroke="#e2e2e2" stroke-width="1.2" mask="url(#mo)"/><circle cx="688.7" cy="10.5" r="4.6" fill="none" stroke="#4a7cc7" stroke-width="1" clip-path="url(#co)"/><g fill="none" stroke="#e0e0e0" stroke-width="1.1"><path d="M733.4 3.9 V1.6 H742.6 V10.8 H740.4"/><rect x="729.6" y="4.4" width="10.4" height="10.2"/><path d="M733.6 6.4 V8.2 M733.6 10.6 H735.2 M736.8 10.6 H738.4" stroke-width="1.2"/></g><g fill="none" stroke="#d8d8d8" stroke-width="1.1"><circle cx="761.1" cy="7.9" r="6.4"/><path d="M754.8 5.4 H767.4 M754.8 10.4 H767.4 M761.1 1.5 V14.3"/></g><circle cx="780.1" cy="7.9" r="7" fill="#e3e3e3"/><g><path d="M799.1 7.9 V1.7 A6.2 6.2 0 0 0 792.9 7.9 Q795.4 10.2 799.1 7.9Z" fill="#c6c6c6"/><circle cx="799.1" cy="7.9" r="6.4" fill="none" stroke="#d8d8d8" stroke-width="1.1"/><path d="M799.1 1.6 V7.9 L803.6 12.3" fill="none" stroke="#d8d8d8" stroke-width="1"/><path d="M793.2 8.4 Q796.2 11 799.1 7.9" fill="none" stroke="#d8d8d8" stroke-width=".9"/><path d="M799.6 12.2 l1.5 1.5 M801.2 10.8 l1.7 1.7" stroke="#cfcfcf" stroke-width=".8"/></g><g fill="none" stroke="#d8d8d8"><circle cx="818.1" cy="7.9" r="6.4" stroke-width="1.1"/><path d="M814.4 6.6 Q815.2 4.2 817.8 3.6" stroke-width="1.5" stroke-linecap="round"/><path d="M817.4 13.2 l1 -1 M819.2 12.6 l1.4 -1.4 M821 11.4 l1.6 -1.6 M822.4 9.4 l1.4 -1.4" stroke-width=".8"/></g></svg>
</div>
<svg class="ic" id="gizmo" style="left:0;top:0" width="854" height="120" viewBox="0 0 854 120"><g><circle cx="803" cy="61.9" r="6.6" fill="#a34d44" stroke="#c0574b" stroke-width="1"/><text x="802.6" y="65.3" text-anchor="middle" font-size="9.6" fill="#1e1211" style="font-family:'DejaVu Sans','Liberation Sans',sans-serif">X</text><line x1="804" y1="47" x2="804" y2="71.4" stroke="#4a7fd4" stroke-width="2.2"/><line x1="779" y1="71.4" x2="804" y2="71.2" stroke="#5fb43a" stroke-width="2"/><circle cx="805" cy="80.2" r="8.3" fill="#504543" stroke="#c45a4e" stroke-width="1.4"/><circle cx="836.1" cy="70.2" r="7.6" fill="#555855" stroke="#5fb43a" stroke-width="1.3"/><circle cx="804.3" cy="101.8" r="7.2" fill="#3f527a" stroke="#4a7fd4" stroke-width="1.3"/><circle cx="803.7" cy="40.2" r="8.3" fill="#4a7fd4"/><circle cx="772" cy="71.6" r="8.2" fill="#5fb43a"/></g><text x="803.7" y="43.8" text-anchor="middle" font-size="9.6" fill="#141a28" style="font-family:'DejaVu Sans','Liberation Sans',sans-serif">Z</text><text x="772" y="75.2" text-anchor="middle" font-size="9.6" fill="#14200c" style="font-family:'DejaVu Sans','Liberation Sans',sans-serif">Y</text><circle cx="851.5" cy="42" r="7" fill="#2e2e2e"/><path d="M852.6 38.4 L849 42 L852.6 45.6" fill="none" stroke="#cfcfcf" stroke-width="1.1"/></svg>
<svg class="ic" id="nav" style="left:0;top:105px" width="854" height="130" viewBox="0 105 854 130"><circle cx="832" cy="125.6" r="13.6" fill="#313131"/><circle cx="832" cy="155.9" r="13.6" fill="#313131"/><circle cx="832" cy="186.1" r="13.6" fill="#313131"/><circle cx="832" cy="216" r="13.6" fill="#313131"/><g><path d="M829 128.8 L825 132.8" stroke="#e2e2e2" stroke-width="2.2" stroke-linecap="round"/><circle cx="833.6" cy="124.3" r="6.3" fill="#e4e4e4"/><path d="M830.4 124.3 H836.8 M833.6 121.1 V127.5" stroke="#2a2a2a" stroke-width="1.2"/></g><g transform="translate(831.9 156.2) scale(1.13) translate(-831.4 -155.8)"><path d="M826.2 158.4 L824.4 155.2 Q824.2 153.8 825.6 154.2 L827.6 156.4 L827.2 150.6 Q827.6 149.4 828.8 150.4 L829.6 154.4 L829.8 148.8 Q830.6 147.6 831.6 148.8 L832 154.2 L833.2 149.4 Q834.2 148.4 835 149.8 L834.6 155.2 L836.8 152 Q838 151.4 838.2 152.8 L836.6 158.2 Q835.8 163 831.6 163.4 Q828 163.2 826.2 158.4Z" fill="#e4e4e4"/></g><g fill="#e4e4e4"><path d="M824.1 183.3 A3.4 3.4 0 0 1 830.6 181.6 A4.3 4.3 0 1 1 836 186.6 H827.5 A3.4 3.4 0 0 1 824.1 183.3Z"/><rect x="827.7" y="188" width="7.4" height="6" rx=".8"/><path d="M836.2 191.2 L840.2 188.8 V193.6Z"/><rect x="825.9" y="189.4" width="2" height="3"/><circle cx="827.5" cy="183.3" r="1.1" fill="#3a3a3a"/><circle cx="834.6" cy="182.3" r="1.3" fill="#3a3a3a"/></g><g fill="none" stroke="#e4e4e4" stroke-width="1.2"><path d="M828 210.4 H836.8 L839.8 222.6 H824.2Z"/><path d="M827 214.2 H837.8 M826 218.2 H838.8 M830.8 210.4 L829.6 222.6 M833.8 210.4 L834.8 222.6"/></g></svg>
<div id="divider"></div>
<div id="outliner">
<div class="row" style="top:-4px"></div>
<div class="row alt" style="top:16px"></div>
<div class="row sel" style="top:36px"></div>
<div class="row alt" style="top:56px"></div>
<div class="row" style="top:76px"></div>
<div class="row alt" style="top:96px"></div>
<div class="row" style="top:116px"></div>
<div class="row alt" style="top:136px"></div>
<div class="row" style="top:156px"></div>
<div class="row alt" style="top:176px"></div>
<div class="row" style="top:196px"></div>
<div class="row alt" style="top:216px"></div>
<div class="row" style="top:236px"></div>
<div class="row alt" style="top:256px"></div>
<div class="row" style="top:276px"></div>
<svg class="ic" style="left:0;top:0" width="330" height="60" viewBox="0 0 330 60"><g fill="#e0e0e0"><rect x="23.100000000000023" y="-0.3" width="14" height="3.5"/><rect x="24.200000000000024" y="4.3" width="11.8" height="8.1"/><rect x="28.100000000000023" y="5.7" width="4" height="1.6" fill="#272727"/></g><rect x="40.6" y="17.6" width="18.8" height="16.8" rx="4" fill="#3a3a3a" stroke="#5a5a5a" stroke-width="1.3"/><g fill="#e0e0e0"><rect x="42.89999999999998" y="20.0" width="14" height="3.5"/><rect x="43.99999999999998" y="24.6" width="11.8" height="8.1"/><rect x="47.89999999999998" y="26.0" width="4" height="1.6" fill="#3a3a3a"/></g><path d="M26.6 24.2 H32.6 L29.6 30.2Z" fill="#bdbdbd"/><line x1="29.6" y1="41.2" x2="29.6" y2="50.8" stroke="#857a68" stroke-width="1"/><path d="M47 43.6 L53 46.5 L47 49.4Z" fill="#c0c0c0"/><rect x="60.6" y="37.4" width="19.2" height="17.6" rx="4.2" fill="#5b6f93" stroke="#6f7f99" stroke-width="1" stroke-dasharray="1 1"/><path d="M64.4 40.6 H76.4 L70.4 51.6Z" fill="none" stroke="#f09a33" stroke-width="2.6" stroke-linejoin="round"/><path d="M135.4 40.8 H142.5 M143.5 42.8 L139.9 48.9 M134.4 42.8 L137.9 48.9" fill="none" stroke="#62c742" stroke-width="1.1"/><rect x="132.10" y="39.40" width="2.80" height="2.80" fill="none" stroke="#62c742" stroke-width="1.1"/><rect x="143.00" y="39.40" width="2.80" height="2.80" fill="none" stroke="#62c742" stroke-width="1.1"/><rect x="137.55" y="49.50" width="2.80" height="2.80" fill="none" stroke="#62c742" stroke-width="1.1"/><rect x="269" y="21" width="10.2" height="10" rx="1" fill="#e2e2e2"/><path d="M270.8 26 L273.4 28.6 L277.6 23.4" fill="none" stroke="#2a2a2a" stroke-width="1.7"/><path d="M287.9 25.5 Q294.5 18.1 301.1 25.5 Q294.5 32.9 287.9 25.5Z" fill="#e4e4e4"/><circle cx="294.5" cy="25.5" r="2.9" fill="#2d2d2d"/><circle cx="294.5" cy="25.5" r="1.4" fill="#e4e4e4"/><path d="M306.8999999999999 21.7 H310.49999999999994 L311.69999999999993 19.7 H315.49999999999994 L316.69999999999993 21.7 H320.2999999999999 V30.7 H306.8999999999999 Z" fill="#e4e4e4"/><circle cx="313.5999999999999" cy="25.8" r="3.6" fill="none" stroke="#2d2d2d" stroke-width="1"/><circle cx="313.5999999999999" cy="25.8" r="1.9" fill="none" stroke="#2d2d2d" stroke-width="1"/><path d="M287.9 45.5 Q294.5 38.1 301.1 45.5 Q294.5 52.9 287.9 45.5Z" fill="#e4e4e4"/><circle cx="294.5" cy="45.5" r="2.9" fill="#3b5689"/><circle cx="294.5" cy="45.5" r="1.4" fill="#e4e4e4"/><path d="M306.8999999999999 41.7 H310.49999999999994 L311.69999999999993 39.7 H315.49999999999994 L316.69999999999993 41.7 H320.2999999999999 V50.7 H306.8999999999999 Z" fill="#e4e4e4"/><circle cx="313.5999999999999" cy="45.800000000000004" r="3.6" fill="none" stroke="#3b5689" stroke-width="1"/><circle cx="313.5999999999999" cy="45.800000000000004" r="1.9" fill="none" stroke="#3b5689" stroke-width="1"/></svg>
<div class="t" style="top:1.0px;left:44.0px;">Scene Collection</div>
<div class="t" style="top:21.0px;left:64.0px;">Collection</div>
<div class="t" style="top:41.0px;left:84.0px;color:#f7a037">Cube</div>
</div>
<div id="props">
<div class="hdr"></div>
<div class="btn" style="left:9.1px;top:2.7px;width:30.3px;height:18.6px;border:0"></div>
<div class="dk" style="left:112px;top:2.7px;width:109.3px;height:18.6px;border:0"></div>
<div class="btn" style="left:304.8px;top:2.7px;width:18.9px;height:18.6px;border:0"></div>
<div class="tabs">
<div class="tab" style="top:9px"></div>
<div class="tab" style="top:45px"></div>
<div class="tab" style="top:73px"></div>
<div class="tab" style="top:101px"></div>
<div class="tab" style="top:129px"></div>
<div class="tab" style="top:157px"></div>
<div class="tab" style="top:193px"></div>
<div class="tab on" style="top:229px"></div>
<div class="tab" style="top:257px"></div>
<div class="tab" style="top:285px"></div>
<div class="tab" style="top:313px"></div>
<div class="tab" style="top:341px"></div>
<div class="tab" style="top:369px"></div>
<div class="tab" style="top:397px"></div>
<div class="tab" style="top:433px"></div>
</div>
<div class="body"></div>
<div class="fld" style="left:149px;top:129.5px;width:134.4px;height:59px;border-radius:4px;background:#3b3b3b"></div>
<div class="fld" style="left:149px;top:129.6px;width:134.4px;height:18.8px;border-radius:4px 2px 0 0"></div>
<div class="fld" style="left:149px;top:149.5px;width:134.4px;height:18.8px;border-radius:0"></div>
<div class="fld" style="left:149px;top:169.3px;width:134.4px;height:18.8px;border-radius:0 0 2px 4px"></div>
<div class="fld" style="left:149px;top:194.5px;width:134.4px;height:59px;border-radius:4px;background:#3b3b3b"></div>
<div class="fld" style="left:149px;top:194.6px;width:134.4px;height:18.8px;border-radius:4px 2px 0 0"></div>
<div class="fld" style="left:149px;top:214.5px;width:134.4px;height:18.8px;border-radius:0"></div>
<div class="fld" style="left:149px;top:234.3px;width:134.4px;height:18.8px;border-radius:0 0 2px 4px"></div>
<div class="fld" style="left:149px;top:284.5px;width:134.4px;height:59px;border-radius:4px;background:#3b3b3b"></div>
<div class="fld" style="left:149px;top:284.6px;width:134.4px;height:18.8px;border-radius:4px 2px 0 0"></div>
<div class="fld" style="left:149px;top:304.5px;width:134.4px;height:18.8px;border-radius:0"></div>
<div class="fld" style="left:149px;top:324.3px;width:134.4px;height:18.8px;border-radius:0 0 2px 4px"></div>
<div class="btn" style="left:148.2px;top:259.4px;width:135.6px;height:19.4px;background:#2b2b2b;border-color:#3f3f3f"></div>
<div class="btn" style="left:37.2px;top:70.1px;width:30px;height:18px;border-radius:4px 0 0 4px;background:#2c2c2c;border:0"></div>
<div class="dk" style="left:68.0px;top:70.1px;width:255.4px;height:18px;border-radius:0 4px 4px 0;border:0"></div>
<svg class="ic" style="left:0;top:0" width="330" height="469" viewBox="0 0 330 469"><rect x="13.2" y="5.3" width="13.8" height="5.8" rx="2.9" fill="#e2e2e2"/><rect x="13.2" y="13.4" width="13.8" height="5.8" rx="2.9" fill="#e2e2e2"/><path d="M20.0 6.5 h4.4 a1.7 1.7 0 0 1 0 3.4 h-4.2Z" fill="#2c2c2c"/><path d="M22.6 14.6 h1.8 a1.7 1.7 0 0 1 0 3.4 h-1.8Z" fill="#2c2c2c"/><g fill="none" stroke="#e0e0e0" stroke-width="1.2"><circle cx="125.4" cy="10.2" r="4.2"/><path d="M122.4 13.4 L117.0 18.6" stroke-linecap="round"/></g><g fill="none" stroke="#e0e0e0" stroke-width="1.1" stroke-opacity="0.7"><path d="M39.40 39.40 V36.30 H42.50 M49.70 36.30 H52.80 V39.40 M52.80 46.60 V49.70 H49.70 M42.50 49.70 H39.40 V46.60"/></g><rect x="42.00" y="38.90" width="8.2" height="8.2" fill="#e0e0e0"/><g fill="none" stroke="#e0e0e0" stroke-width="1.1" stroke-opacity="0.7"><path d="M41.40 75.50 V72.40 H44.50 M51.70 72.40 H54.80 V75.50 M54.80 82.70 V85.80 H51.70 M44.50 85.80 H41.40 V82.70"/></g><rect x="44.00" y="75.00" width="8.2" height="8.2" fill="#e0e0e0"/><g fill="none" stroke="#bdbdbd" stroke-width="1"><path d="M318.2 36.6 L322.2 40.8 L319 44 L318.2 47.4 L311 41.2 L314.6 40.2Z"/><path d="M314.4 44.4 L308.4 49.6"/></g><g fill="#dadada"><rect x="9.600000000000046" y="40" width="1.2" height="6.8"/><ellipse cx="10.200000000000045" cy="50.5" rx="2.5" ry="3.3"/><path d="M15.000000000000046 40 V42.6 Q15.200000000000045 44.8 17.200000000000045 45.6 V52.6 A1.45 1.45 0 0 0 20.100000000000044 52.6 V45.6 Q22.000000000000046 44.8 22.200000000000045 42.6 V40 H20.400000000000045 V43.2 H16.800000000000047 V40Z"/></g><circle cx="18.650000000000045" cy="52.4" r=".7" fill="#2d2d2d"/><g fill="none" stroke="#dadada" stroke-width="1.3"><rect x="8.500000000000046" y="79.6" width="12.8" height="9.2" rx="1"/><path d="M11.100000000000046 79.4 L12.300000000000045 77.6 H15.300000000000045 L16.500000000000046 79.4"/></g><g fill="#dadada"><rect x="10.700000000000045" y="81.8" width="6.4" height="1.1"/><rect x="10.700000000000045" y="83.8" width="6.4" height="1.1"/><rect x="10.700000000000045" y="85.8" width="6.4" height="1.1"/><rect x="18.500000000000046" y="81.6" width="1.6" height="1.6"/><rect x="18.500000000000046" y="85.2" width="1.6" height="1.6"/><rect x="18.700000000000045" y="77.4" width="2" height="1"/></g><path d="M8.100000000000046 105 H21.300000000000047 V112.2 H19.700000000000045 V108.6 H9.700000000000045 V112.2 H8.100000000000046Z" fill="#dadada"/><rect x="11.100000000000046" y="110" width="7.4" height="7.6" fill="#a8a8a8"/><path d="M11.900000000000045 116.4 L14.300000000000045 113 L16.100000000000044 115 L16.900000000000045 114.2 L17.900000000000045 116.4Z" fill="#404040"/><rect x="16.100000000000044" y="111.2" width="1.4" height="1.4" fill="#404040"/><g fill="none" stroke="#dadada" stroke-width="1.1"><rect x="11.900000000000045" y="132.8" width="9.4" height="9.4"/><path d="M10.100000000000046 135 V144 H19.100000000000044"/><path d="M8.300000000000045 137 V145.8 H17.100000000000044" stroke-opacity=".8"/></g><path d="M12.700000000000045 141.4 L15.300000000000045 137 L17.500000000000046 140 L18.500000000000046 139 L20.500000000000046 141.4Z" fill="#dadada"/><rect x="18.100000000000044" y="134.4" width="1.6" height="1.6" fill="#dadada"/><path d="M12.100000000000046 160.6 Q15.500000000000046 165.6 15.300000000000045 169.4 Q12.100000000000046 172 8.300000000000045 170 Q9.100000000000046 165.6 12.100000000000046 160.6Z" fill="#bdbdbd"/><circle cx="17.100000000000044" cy="169.8" r="3.7" fill="#303030" stroke="#dadada" stroke-width="1.1"/><path d="M15.300000000000045 169.2 Q15.900000000000045 167.8 17.300000000000047 167.6" fill="none" stroke="#dadada" stroke-width=".8"/><circle cx="19.500000000000046" cy="161.8" r="1.9" fill="#dadada"/><circle cx="14.700000000000045" cy="195" r="6.3" fill="none" stroke="#d9614f" stroke-width="1.1"/><path d="M10.700000000000045 191.4 Q12.700000000000045 190 14.300000000000045 190.8 L13.900000000000045 192.6 L12.100000000000046 193.6 L11.300000000000045 193Z M14.100000000000046 195.6 L17.100000000000044 196 L17.900000000000045 197.8 L16.100000000000044 199.6 L14.900000000000045 197.8Z" fill="#d9614f"/><path d="M8.300000000000045 201.4 L11.700000000000045 198 M18.300000000000047 191.8 L21.300000000000047 188.8" stroke="#d9614f" stroke-width="1" fill="none"/><g fill="none" stroke="#d0d0d0" stroke-width="1"><rect x="8.200000000000045" y="224.6" width="13" height="3.2"/><rect x="9.400000000000045" y="227.8" width="10.6" height="9.2"/></g><rect x="12.700000000000045" y="230.4" width="4" height="1.6" fill="#d0d0d0"/><g fill="none" stroke="#f39a34" stroke-width="1.1" stroke-opacity="0.85"><path d="M7.90 263.30 V260.20 H11.00 M18.40 260.20 H21.50 V263.30 M21.50 270.70 V273.80 H18.40 M11.00 273.80 H7.90 V270.70"/></g><rect x="10.50" y="262.80" width="8.4" height="8.4" fill="#f39a34"/><g transform="translate(14.700000000000045 295) rotate(45)"><path d="M-1.6 -2.2 V7.4 A1.6 1.6 0 0 0 1.6 7.4 V-2.2 A4.4 4.4 0 0 0 4.3 -6.6 L3.6 -8.6 H2.2 V-5 H-2.2 V-8.6 H-3.6 L-4.3 -6.6 A4.4 4.4 0 0 0 -1.6 -2.2Z" fill="#5b92e0"/></g><g stroke="#5b92e0" stroke-width="1" fill="none"><path d="M10.100000000000046 318.6 H19.700000000000045 M10.100000000000046 318.6 V328 M11.100000000000046 319.6 L19.100000000000044 327.4" stroke-opacity=".8"/></g><g fill="#5b92e0"><circle cx="10.100000000000046" cy="318.6" r="2.2"/><circle cx="19.900000000000045" cy="318.6" r="1.5"/><circle cx="10.100000000000046" cy="328.2" r="1.5"/><circle cx="19.500000000000046" cy="327.8" r="1.9"/></g><path d="M16.300000000000047 345.2 A6.2 6.2 0 1 0 20.700000000000045 353.6" fill="none" stroke="#5b92e0" stroke-width="1"/><circle cx="14.300000000000045" cy="351.6" r="2.6" fill="#5b92e0"/><circle cx="19.700000000000045" cy="346.6" r="1.7" fill="#5b92e0"/><g fill="none" stroke="#5b92e0" stroke-width="1.1"><path d="M9.100000000000046 378.4 Q11.100000000000046 374.4 17.900000000000045 372.6 Q22.100000000000044 372.6 20.900000000000045 376.4 Q19.100000000000044 382.4 15.300000000000045 384.6 Q10.100000000000046 386.4 8.500000000000046 382.4 Q7.900000000000046 380.4 9.100000000000046 378.4Z"/><circle cx="13.300000000000045" cy="380.4" r="2.6" stroke-width="1.4"/></g><circle cx="18.900000000000045" cy="374.8" r="1" fill="#5b92e0"/><path d="M11.9 401.6 H17.8 M18.8 403.6 L15.8 410.0 M10.8 403.6 L13.8 410.0" fill="none" stroke="#5fc13e" stroke-width="1.05"/><rect x="8.48" y="400.18" width="2.85" height="2.85" fill="none" stroke="#5fc13e" stroke-width="1.05"/><rect x="18.28" y="400.18" width="2.85" height="2.85" fill="none" stroke="#5fc13e" stroke-width="1.05"/><rect x="13.38" y="410.48" width="2.85" height="2.85" fill="none" stroke="#5fc13e" stroke-width="1.05"/><circle cx="14.700000000000045" cy="435" r="6.4" fill="none" stroke="#d9614f" stroke-width="1"/><path d="M14.700000000000045 435 V428.6 A6.4 6.4 0 0 0 8.300000000000045 435 Z M14.700000000000045 435 H21.100000000000044 A6.4 6.4 0 0 1 14.700000000000045 441.4Z" fill="#d9614f" fill-opacity=".85"/><rect x="8.300000000000045" y="464.6" width="3.2" height="3.2" fill="#d9614f"/><rect x="8.300000000000045" y="471.0" width="3.2" height="3.2" fill="#d9614f"/><rect x="11.500000000000046" y="467.8" width="3.2" height="3.2" fill="#d9614f"/><rect x="11.500000000000046" y="474.20000000000005" width="3.2" height="3.2" fill="#d9614f"/><rect x="14.700000000000045" y="464.6" width="3.2" height="3.2" fill="#d9614f"/><rect x="14.700000000000045" y="471.0" width="3.2" height="3.2" fill="#d9614f"/><rect x="17.90000000000005" y="467.8" width="3.2" height="3.2" fill="#d9614f"/><rect x="17.90000000000005" y="474.20000000000005" width="3.2" height="3.2" fill="#d9614f"/><rect x="8.300000000000045" y="464.6" width="12.8" height="12.8" fill="none" stroke="#d9614f" stroke-width="1"/><path d="M36.8 106 h6.6 l-3.3 6Z" fill="#b2b2b2"/><rect x="313.6" y="107.0" width="1.6" height="1.6" fill="#262626"/><rect x="313.6" y="110.4" width="1.6" height="1.6" fill="#262626"/><rect x="316.6" y="107.0" width="1.6" height="1.6" fill="#262626"/><rect x="316.6" y="110.4" width="1.6" height="1.6" fill="#262626"/><rect x="319.6" y="107.0" width="1.6" height="1.6" fill="#262626"/><rect x="319.6" y="110.4" width="1.6" height="1.6" fill="#262626"/><rect x="322.6" y="107.0" width="1.6" height="1.6" fill="#262626"/><rect x="322.6" y="110.4" width="1.6" height="1.6" fill="#262626"/><path d="M37.0 384.5 l6.2 3.3 l-6.2 3.3Z" fill="#b2b2b2"/><rect x="313.6" y="386.8" width="1.6" height="1.6" fill="#262626"/><rect x="313.6" y="390.2" width="1.6" height="1.6" fill="#262626"/><rect x="316.6" y="386.8" width="1.6" height="1.6" fill="#262626"/><rect x="316.6" y="390.2" width="1.6" height="1.6" fill="#262626"/><rect x="319.6" y="386.8" width="1.6" height="1.6" fill="#262626"/><rect x="319.6" y="390.2" width="1.6" height="1.6" fill="#262626"/><rect x="322.6" y="386.8" width="1.6" height="1.6" fill="#262626"/><rect x="322.6" y="390.2" width="1.6" height="1.6" fill="#262626"/><path d="M37.0 408.5 l6.2 3.3 l-6.2 3.3Z" fill="#b2b2b2"/><rect x="313.6" y="410.8" width="1.6" height="1.6" fill="#262626"/><rect x="313.6" y="414.2" width="1.6" height="1.6" fill="#262626"/><rect x="316.6" y="410.8" width="1.6" height="1.6" fill="#262626"/><rect x="316.6" y="414.2" width="1.6" height="1.6" fill="#262626"/><rect x="319.6" y="410.8" width="1.6" height="1.6" fill="#262626"/><rect x="319.6" y="414.2" width="1.6" height="1.6" fill="#262626"/><rect x="322.6" y="410.8" width="1.6" height="1.6" fill="#262626"/><rect x="322.6" y="414.2" width="1.6" height="1.6" fill="#262626"/><path d="M37.0 432.5 l6.2 3.3 l-6.2 3.3Z" fill="#b2b2b2"/><rect x="313.6" y="434.8" width="1.6" height="1.6" fill="#262626"/><rect x="313.6" y="438.2" width="1.6" height="1.6" fill="#262626"/><rect x="316.6" y="434.8" width="1.6" height="1.6" fill="#262626"/><rect x="316.6" y="438.2" width="1.6" height="1.6" fill="#262626"/><rect x="319.6" y="434.8" width="1.6" height="1.6" fill="#262626"/><rect x="319.6" y="438.2" width="1.6" height="1.6" fill="#262626"/><rect x="322.6" y="434.8" width="1.6" height="1.6" fill="#262626"/><rect x="322.6" y="438.2" width="1.6" height="1.6" fill="#262626"/><path d="M37.0 456.5 l6.2 3.3 l-6.2 3.3Z" fill="#b2b2b2"/><rect x="313.6" y="458.8" width="1.6" height="1.6" fill="#262626"/><rect x="313.6" y="462.2" width="1.6" height="1.6" fill="#262626"/><rect x="316.6" y="458.8" width="1.6" height="1.6" fill="#262626"/><rect x="316.6" y="462.2" width="1.6" height="1.6" fill="#262626"/><rect x="319.6" y="458.8" width="1.6" height="1.6" fill="#262626"/><rect x="319.6" y="462.2" width="1.6" height="1.6" fill="#262626"/><rect x="322.6" y="458.8" width="1.6" height="1.6" fill="#262626"/><rect x="322.6" y="462.2" width="1.6" height="1.6" fill="#262626"/><path d="M51.0 361.1 l6 3.2 l-6 3.2Z" fill="#b2b2b2"/><g fill="none" stroke="#cfcfcf" stroke-width="1"><path d="M286.19999999999993 138.10000000000002 V136.50000000000003 A3 3.2 0 0 1 292.19999999999993 136.50000000000003 V138.30000000000004"/><rect x="290.9999999999999" y="138.50000000000003" width="8.2" height="5.4"/><path d="M295.0999999999999 140.30000000000004 V142.10000000000002" stroke-width="1.2"/></g><circle cx="314" cy="139.1" r="1.9" fill="#cdcdcd"/><g fill="none" stroke="#cfcfcf" stroke-width="1"><path d="M286.19999999999993 158.10000000000002 V156.50000000000003 A3 3.2 0 0 1 292.19999999999993 156.50000000000003 V158.30000000000004"/><rect x="290.9999999999999" y="158.50000000000003" width="8.2" height="5.4"/><path d="M295.0999999999999 160.30000000000004 V162.10000000000002" stroke-width="1.2"/></g><circle cx="314" cy="159.1" r="1.9" fill="#cdcdcd"/><g fill="none" stroke="#cfcfcf" stroke-width="1"><path d="M286.19999999999993 178.10000000000002 V176.50000000000003 A3 3.2 0 0 1 292.19999999999993 176.50000000000003 V178.30000000000004"/><rect x="290.9999999999999" y="178.50000000000003" width="8.2" height="5.4"/><path d="M295.0999999999999 180.30000000000004 V182.10000000000002" stroke-width="1.2"/></g><circle cx="314" cy="179.1" r="1.9" fill="#cdcdcd"/><g fill="none" stroke="#cfcfcf" stroke-width="1"><path d="M286.19999999999993 203.10000000000002 V201.50000000000003 A3 3.2 0 0 1 292.19999999999993 201.50000000000003 V203.30000000000004"/><rect x="290.9999999999999" y="203.50000000000003" width="8.2" height="5.4"/><path d="M295.0999999999999 205.30000000000004 V207.10000000000002" stroke-width="1.2"/></g><circle cx="314" cy="204.1" r="1.9" fill="#cdcdcd"/><g fill="none" stroke="#cfcfcf" stroke-width="1"><path d="M286.19999999999993 223.10000000000002 V221.50000000000003 A3 3.2 0 0 1 292.19999999999993 221.50000000000003 V223.30000000000004"/><rect x="290.9999999999999" y="223.50000000000003" width="8.2" height="5.4"/><path d="M295.0999999999999 225.30000000000004 V227.10000000000002" stroke-width="1.2"/></g><circle cx="314" cy="224.1" r="1.9" fill="#cdcdcd"/><g fill="none" stroke="#cfcfcf" stroke-width="1"><path d="M286.19999999999993 243.09999999999997 V241.49999999999997 A3 3.2 0 0 1 292.19999999999993 241.49999999999997 V243.29999999999998"/><rect x="290.9999999999999" y="243.49999999999997" width="8.2" height="5.4"/><path d="M295.0999999999999 245.29999999999998 V247.09999999999997" stroke-width="1.2"/></g><circle cx="314" cy="244.1" r="1.9" fill="#cdcdcd"/><g fill="none" stroke="#cfcfcf" stroke-width="1"><path d="M286.19999999999993 293.09999999999997 V291.5 A3 3.2 0 0 1 292.19999999999993 291.5 V293.29999999999995"/><rect x="290.9999999999999" y="293.5" width="8.2" height="5.4"/><path d="M295.0999999999999 295.29999999999995 V297.09999999999997" stroke-width="1.2"/></g><circle cx="314" cy="294.1" r="1.9" fill="#cdcdcd"/><g fill="none" stroke="#cfcfcf" stroke-width="1"><path d="M286.19999999999993 313.09999999999997 V311.5 A3 3.2 0 0 1 292.19999999999993 311.5 V313.29999999999995"/><rect x="290.9999999999999" y="313.5" width="8.2" height="5.4"/><path d="M295.0999999999999 315.29999999999995 V317.09999999999997" stroke-width="1.2"/></g><circle cx="314" cy="314.1" r="1.9" fill="#cdcdcd"/><g fill="none" stroke="#cfcfcf" stroke-width="1"><path d="M286.19999999999993 333.09999999999997 V331.5 A3 3.2 0 0 1 292.19999999999993 331.5 V333.29999999999995"/><rect x="290.9999999999999" y="333.5" width="8.2" height="5.4"/><path d="M295.0999999999999 335.29999999999995 V337.09999999999997" stroke-width="1.2"/></g><circle cx="314" cy="334.1" r="1.9" fill="#cdcdcd"/><circle cx="314" cy="269.2" r="1.9" fill="#cdcdcd"/></svg>
<svg class="ic" style="left:29.9px;top:10.6px" width="7" height="4.8" viewBox="0 0 7 4.8" ><path d="M1 1 L3.5 3.8 L6 1" fill="none" stroke="#dedede" stroke-width="1.2" stroke-linecap="round" stroke-linejoin="round"/></svg>
<svg class="ic" style="left:310.5px;top:10.5px" width="7.6" height="5" viewBox="0 0 7.6 5" ><path d="M1 1 L3.8 4 L6.6 1" fill="none" stroke="#dedede" stroke-width="1.4" stroke-linecap="round" stroke-linejoin="round"/></svg>
<svg class="ic" style="left:57.9px;top:77.6px" width="7" height="4.8" viewBox="0 0 7 4.8" ><path d="M1 1 L3.5 3.8 L6 1" fill="none" stroke="#dedede" stroke-width="1.2" stroke-linecap="round" stroke-linejoin="round"/></svg>
<svg class="ic" style="left:273.6px;top:267.5px" width="7.6" height="5" viewBox="0 0 7.6 5" ><path d="M1 1 L3.8 4 L6.6 1" fill="none" stroke="#dedede" stroke-width="1.3" stroke-linecap="round" stroke-linejoin="round"/></svg>
<div class="t" style="top:37.2px;left:61.8px;">Cube</div>
<div class="t" style="top:73.2px;left:74.8px;">Cube</div>
<div class="pt" style="top:102.8px;left:49.6px;">Transform</div>
<div class="t" style="top:133.2px;left:-61.2px;width:200px;text-align:right;">Location X</div>
<div class="t" style="top:153.2px;left:-61.2px;width:200px;text-align:right;">Y</div>
<div class="t" style="top:173.2px;left:-61.2px;width:200px;text-align:right;">Z</div>
<div class="t" style="top:198.2px;left:-61.2px;width:200px;text-align:right;">Rotation X</div>
<div class="t" style="top:218.2px;left:-61.2px;width:200px;text-align:right;">Y</div>
<div class="t" style="top:238.2px;left:-61.2px;width:200px;text-align:right;">Z</div>
<div class="t" style="top:263.0px;left:-61.2px;width:200px;text-align:right;">Mode</div>
<div class="t" style="top:288.0px;left:-61.2px;width:200px;text-align:right;">Scale X</div>
<div class="t" style="top:308.0px;left:-61.2px;width:200px;text-align:right;">Y</div>
<div class="t" style="top:328.0px;left:-61.2px;width:200px;text-align:right;">Z</div>
<div class="t" style="top:133.2px;left:115.6px;width:200px;text-align:center;">0 m</div>
<div class="t" style="top:153.2px;left:115.6px;width:200px;text-align:center;">0 m</div>
<div class="t" style="top:173.2px;left:115.6px;width:200px;text-align:center;">0 m</div>
<div class="t" style="top:198.2px;left:115.6px;width:200px;text-align:center;">0°</div>
<div class="t" style="top:218.2px;left:115.6px;width:200px;text-align:center;">0°</div>
<div class="t" style="top:238.2px;left:115.6px;width:200px;text-align:center;">0°</div>
<div class="t" style="top:288.0px;left:115.6px;width:200px;text-align:center;">1.000</div>
<div class="t" style="top:308.0px;left:115.6px;width:200px;text-align:center;">1.000</div>
<div class="t" style="top:328.0px;left:115.6px;width:200px;text-align:center;">1.000</div>
<div class="t" style="top:263.0px;left:155.8px;">XYZ Euler</div>
<div class="t" style="top:359.0px;left:64.0px;">Delta Transform</div>
<div class="pt" style="top:382.0px;left:49.6px;">Relations</div>
<div class="pt" style="top:406.0px;left:49.6px;">Collections</div>
<div class="pt" style="top:430.0px;left:49.6px;">Instancing</div>
<div class="pt" style="top:454.0px;left:49.6px;">Motion Paths</div>
</div>
</body></html>
